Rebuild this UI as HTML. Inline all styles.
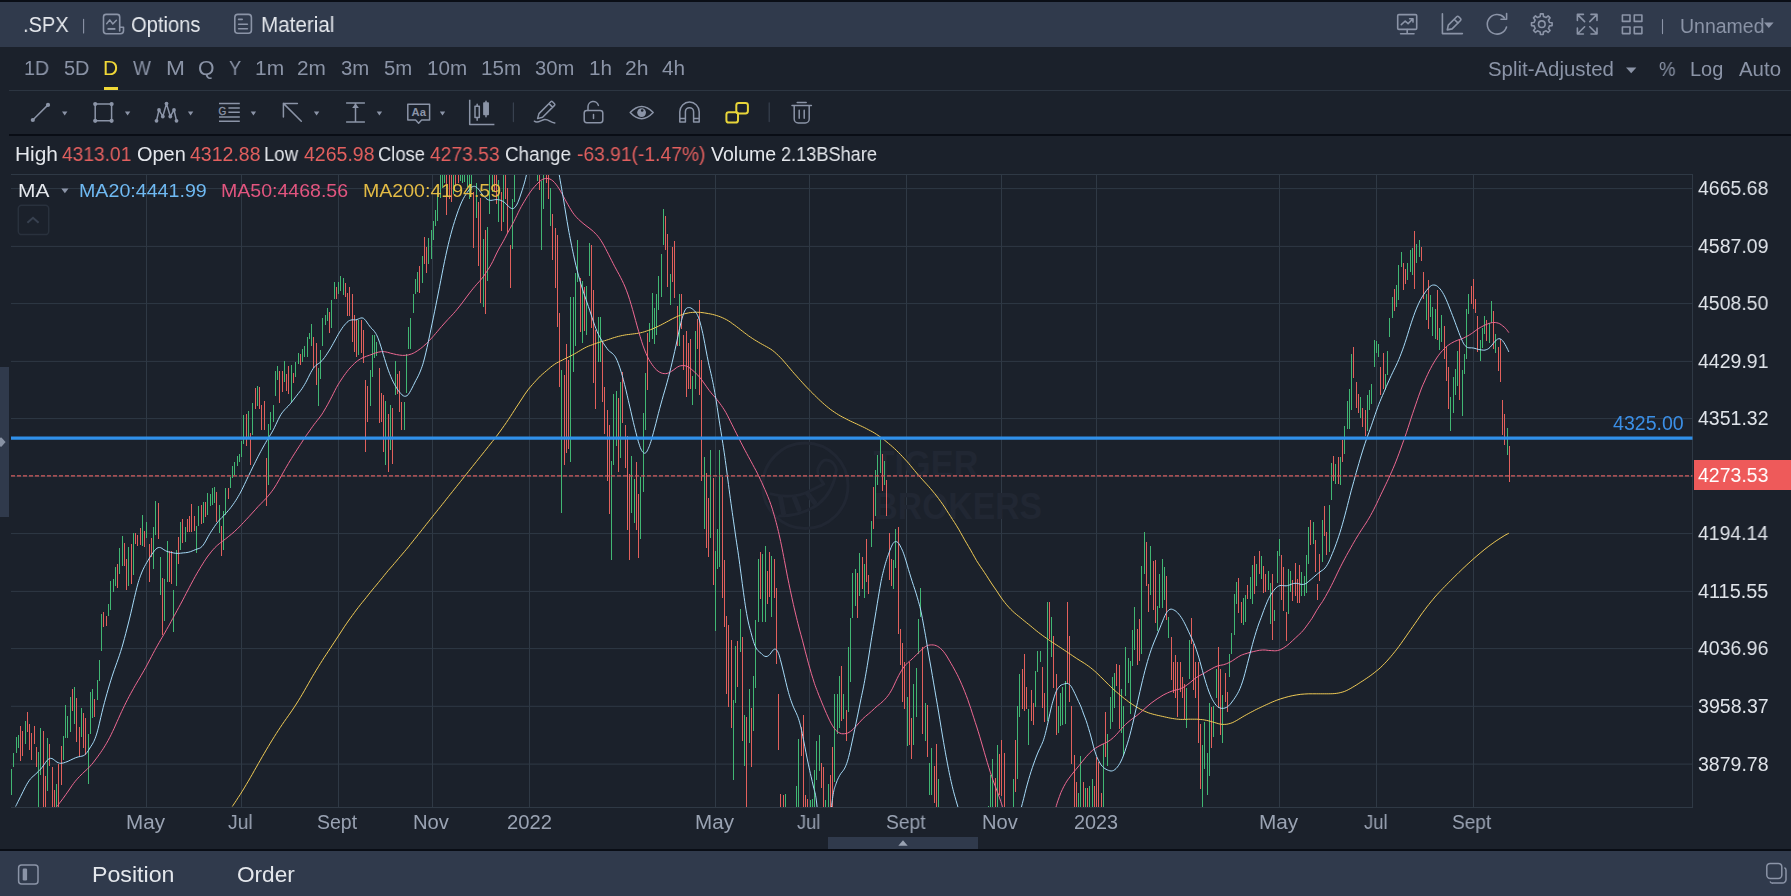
<!DOCTYPE html>
<html lang="en"><head><meta charset="utf-8"><title>.SPX chart</title>
<style>
html,body{margin:0;padding:0}
body{width:1791px;height:896px;overflow:hidden;position:relative;background:#1b212b;font-family:"Liberation Sans",sans-serif}
.abs{position:absolute}
.t{position:absolute;white-space:nowrap;line-height:1;transform-origin:0 50%;display:block;will-change:transform}
svg{position:absolute;left:0;top:0;overflow:visible}
svg text{font-family:"Liberation Sans",sans-serif}
</style></head><body>
<div class="abs" style="left:0;top:0;width:1791px;height:2px;background:#0a0e16"></div>
<div class="abs" style="left:0;top:2px;width:1791px;height:45px;background:#303a4c"></div>
<div class="abs" style="left:0;top:851px;width:1791px;height:45px;background:#303a4c"></div>
<div class="abs" style="left:0;top:849px;width:1791px;height:2px;background:#090d15"></div>
<div class="abs" style="left:9px;top:134px;width:1782px;height:2px;background:#090d15"></div>
<div class="abs" style="left:9px;top:90px;width:1782px;height:1px;background:#2c3541"></div>
<div class="abs" style="left:103.8px;top:87px;width:14.1px;height:3.4px;background:#f0d837"></div>
<div class="abs" style="left:0;top:367px;width:9px;height:150px;background:#303a4c"></div>
<div class="abs" style="left:828px;top:837px;width:150px;height:12px;background:#303a4c"></div>
<div class="abs" style="left:1694px;top:460px;width:97px;height:30px;background:#ee5a5a"></div>

<svg width="1791" height="896" viewBox="0 0 1791 896">
<defs><clipPath id="cc"><rect x="11" y="175" width="1681.5" height="632"/></clipPath></defs>
<path d="M146.5 174.5V807.5M241.5 174.5V807.5M338.5 174.5V807.5M432.5 174.5V807.5M529.5 174.5V807.5M715.5 174.5V807.5M809.5 174.5V807.5M906.5 174.5V807.5M1001.5 174.5V807.5M1096.5 174.5V807.5M1279.5 174.5V807.5M1376.5 174.5V807.5M1473.5 174.5V807.5M11 174.5H1692.5V807.5H11" stroke="#2f3945" stroke-width="1" fill="none" shape-rendering="crispEdges"/><path d="M11 188.6H1692.5M11 246.4H1692.5M11 303.6H1692.5M11 361.4H1692.5M11 418.6H1692.5M11 476.3H1692.5M11 533.6H1692.5M11 591.4H1692.5M11 648.6H1692.5M11 706.3H1692.5M11 764.1H1692.5" stroke="#2f3945" stroke-width="1" fill="none"/>
<g fill="#212733" font-weight="700" font-size="36.5px" style="font-family:'Liberation Sans',sans-serif">
<text x="873.5" y="476.6" textLength="105" lengthAdjust="spacingAndGlyphs">TIGER</text>
<text x="873.5" y="519" textLength="168.5" lengthAdjust="spacingAndGlyphs">BROKERS</text>
</g>
<g fill="none" stroke="#212733" stroke-width="3" stroke-linecap="round" stroke-linejoin="round"><circle cx="805.3" cy="485.8" r="42.7"/>
<path d="M770.9 493.9Q793 500 811.4 490.2Q820 486 823.7 484Q815 472 818.8 466.9Q822 460 826.2 460.1Q832 460.5 834.8 465.6Q837 469 836 472Q833 492 818.8 503.7Q802 516 779.5 516"/>
<path d="M780.5 497.5L783.5 513.5M794.5 498L799 509.5M807.5 493.5L814.5 502.5" stroke-width="5"/></g>
<g clip-path="url(#cc)">
<path d="M20.5 726V761M22.5 731V756M27.5 712V732M29.5 724V750M31.5 733V760M34.5 726V744M36.5 747V767M43.5 731V810M45.5 776V810M49.5 744V766M52.5 767V810M54.5 790V810M58.5 764V810M61.5 746V785M72.5 689V711M76.5 698V742M79.5 727V757M83.5 713V748M85.5 718V755M94.5 699V717M103.5 612V627M106.5 616V626M117.5 564V588M124.5 543V566M126.5 559V590M131.5 544V584M135.5 533V544M137.5 535V546M140.5 528V545M144.5 531V547M149.5 544V582M151.5 538V557M158.5 503V539M162.5 578V635M169.5 551V582M171.5 551V584M178.5 537V564M182.5 519V543M187.5 519V532M189.5 516V532M191.5 504V532M194.5 516V531M201.5 505V524M205.5 502V517M216.5 492V522M221.5 526V556M228.5 488V499M246.5 414V446M250.5 433V465M255.5 388V409M259.5 387V409M261.5 405V430M264.5 401V430M266.5 458V506M279.5 371V403M282.5 371V392M286.5 374V391M288.5 366V394M293.5 373V383M300.5 354V365M313.5 337V368M316.5 343V385M329.5 312V333M336.5 287V299M345.5 283V297M347.5 293V316M349.5 287V316M352.5 294V342M354.5 315V352M356.5 320V357M361.5 320V353M363.5 330V363M365.5 380V452M367.5 386V422M379.5 368V423M381.5 393V422M383.5 395V452M388.5 414V472M392.5 408V464M397.5 374V394M399.5 371V412M401.5 402V430M419.5 266V293M424.5 237V264M426.5 247V273M446.5 170V215M449.5 170V199M451.5 170V202M455.5 170V186M458.5 168V183M473.5 192V248M478.5 202V266M480.5 198V303M485.5 230V314M494.5 170V192M496.5 170V204M501.5 192V231M505.5 170V199M507.5 188V233M510.5 245V288M516.5 140V165M521.5 141V164M528.5 143V162M530.5 141V164M532.5 136V161M534.5 140V165M539.5 170V190M546.5 170V183M548.5 170V199M552.5 214V260M555.5 228V288M557.5 235V327M559.5 313V387M564.5 375V465M566.5 344V453M568.5 360V449M580.5 278V332M584.5 287V331M591.5 245V328M593.5 290V383M595.5 330V409M602.5 342V402M604.5 387V434M607.5 410V481M609.5 425V514M618.5 398V472M622.5 372V423M625.5 425V468M627.5 436V530M629.5 474V560M636.5 462V530M638.5 494V558M647.5 333V390M665.5 216V250M667.5 234V287M672.5 247V282M674.5 241V298M677.5 306V346M681.5 294V329M683.5 335V370M686.5 331V397M688.5 343V389M690.5 339V389M697.5 319V349M699.5 300V395M701.5 360V481M706.5 473V548M708.5 498V557M713.5 478V585M722.5 477V598M724.5 560V627M726.5 616V694M728.5 625V707M731.5 640V728M737.5 641V687M742.5 637V741M746.5 717V810M751.5 708V767M760.5 552V599M767.5 571V604M769.5 552V597M774.5 559V598M776.5 588V664M778.5 694V750M780.5 794V810M783.5 795V810M787.5 830V880M789.5 832V879M794.5 830V880M801.5 727V756M803.5 715V810M805.5 795V810M807.5 799V809M821.5 763V788M823.5 767V810M830.5 775V810M832.5 747V810M841.5 666V721M846.5 710V741M857.5 573V618M862.5 557V589M866.5 539V582M868.5 575V594M873.5 487V529M882.5 454V491M886.5 480V516M889.5 533V580M891.5 559V586M898.5 527V634M900.5 629V665M902.5 643V702M904.5 662V709M909.5 662V745M911.5 718V759M922.5 647V734M927.5 705V757M934.5 766V803M936.5 744V810M940.5 830V880M943.5 833V885M949.5 837V889M954.5 833V890M959.5 820V879M963.5 823V875M965.5 837V872M968.5 831V888M972.5 827V888M974.5 823V874M977.5 825V880M981.5 827V881M983.5 834V880M986.5 830V880M995.5 778V810M999.5 754V795M1001.5 740V796M1004.5 753V810M1006.5 830V870M1008.5 830V870M1015.5 740V792M1022.5 669V709M1024.5 654V711M1026.5 687V709M1031.5 690V721M1033.5 703V725M1042.5 667V708M1044.5 693V722M1049.5 602V639M1053.5 636V688M1056.5 674V735M1067.5 602V684M1069.5 636V702M1071.5 706V764M1074.5 755V810M1076.5 782V810M1083.5 782V810M1087.5 788V810M1094.5 786V810M1096.5 757V810M1098.5 762V810M1101.5 793V810M1105.5 712V757M1116.5 664V686M1119.5 665V729M1137.5 629V665M1139.5 619V661M1146.5 542V586M1148.5 584V612M1153.5 561V610M1155.5 560V623M1166.5 576V620M1171.5 637V680M1173.5 662V693M1175.5 655V698M1177.5 662V717M1180.5 662V692M1182.5 677V698M1184.5 684V719M1191.5 618V644M1193.5 644V690M1195.5 662V698M1198.5 662V743M1200.5 724V789M1211.5 707V748M1218.5 647V708M1220.5 669V735M1225.5 673V702M1227.5 692V712M1238.5 578V613M1241.5 602V623M1247.5 585V599M1254.5 556V594M1259.5 551V574M1263.5 566V593M1265.5 574V592M1272.5 574V640M1281.5 555V600M1283.5 567V611M1286.5 612V641M1292.5 580V601M1295.5 563V596M1297.5 579V603M1299.5 565V603M1310.5 520V545M1315.5 540V572M1317.5 584V600M1319.5 554V581M1324.5 506V536M1326.5 532V555M1333.5 456V481M1338.5 457V484M1342.5 440V462M1353.5 347V378M1356.5 382V408M1358.5 394V413M1362.5 408V427M1365.5 410V436M1380.5 367V395M1383.5 353V389M1394.5 289V311M1403.5 263V290M1405.5 269V284M1414.5 231V289M1421.5 247V261M1423.5 272V299M1428.5 280V329M1437.5 290V340M1444.5 326V359M1446.5 347V381M1448.5 367V409M1459.5 340V400M1471.5 286V304M1473.5 279V309M1475.5 299V313M1477.5 316V352M1486.5 320V341M1493.5 311V349M1498.5 347V371M1500.5 339V382M1502.5 400V435M1504.5 414V445M1509.5 446V482" stroke="#e2605c" stroke-width="1" fill="none" shape-rendering="crispEdges"/>
<path d="M11.5 769V795M13.5 753V767M16.5 737V753M18.5 735V748M25.5 721V744M38.5 752V810M40.5 728V775M47.5 738V791M56.5 784V810M63.5 736V760M65.5 705V738M67.5 716V738M70.5 697V732M74.5 687V724M81.5 708V737M88.5 734V784M90.5 692V734M92.5 689V718M97.5 680V700M99.5 660V681M101.5 614V651M108.5 604V616M110.5 581V610M113.5 579V592M115.5 567V586M119.5 548V574M122.5 536V566M128.5 547V586M133.5 533V575M142.5 515V546M146.5 522V538M153.5 527V569M155.5 501V535M160.5 557V595M164.5 579V621M167.5 541V582M173.5 590V632M176.5 550V586M180.5 522V550M185.5 527V542M196.5 526V553M198.5 506V526M203.5 502V523M207.5 493V515M210.5 494V506M212.5 488V505M214.5 487V503M219.5 505V533M223.5 511V550M225.5 488V515M230.5 477V488M232.5 466V478M234.5 462V475M237.5 456V466M239.5 454V462M241.5 441V457M243.5 415V444M248.5 411V438M252.5 403V435M257.5 386V406M268.5 424V485M270.5 412V430M273.5 405V422M275.5 371V396M277.5 366V380M284.5 361V382M291.5 365V402M295.5 362V377M298.5 353V364M302.5 349V362M304.5 346V357M307.5 337V357M309.5 333V339M311.5 324V346M318.5 368V406M320.5 350V379M322.5 318V346M325.5 315V325M327.5 308V321M331.5 300V328M334.5 282V299M338.5 282V294M340.5 276V291M343.5 278V295M358.5 320V355M370.5 370V406M372.5 335V377M374.5 335V358M376.5 342V356M385.5 401V465M390.5 405V450M395.5 361V395M404.5 402V430M406.5 354V393M408.5 327V349M410.5 318V349M413.5 294V313M415.5 279V294M417.5 272V292M422.5 256V283M428.5 238V264M431.5 230V259M433.5 221V240M435.5 210V226M437.5 192V221M440.5 170V198M442.5 170V188M444.5 170V183M453.5 166V194M460.5 170V181M462.5 170V183M464.5 170V182M467.5 169V187M469.5 170V199M471.5 170V190M476.5 183V218M483.5 239V307M487.5 227V281M489.5 170V214M492.5 170V192M498.5 180V222M503.5 170V222M512.5 199V249M514.5 170V202M519.5 137V166M523.5 135V169M525.5 136V161M537.5 170V181M541.5 181V250M543.5 170V209M550.5 188V226M561.5 370V513M570.5 297V462M573.5 297V372M575.5 273V346M577.5 240V282M582.5 281V343M586.5 286V335M589.5 243V276M598.5 317V362M600.5 317V362M611.5 461V560M613.5 394V465M616.5 391V446M620.5 382V458M631.5 456V513M634.5 479V523M640.5 477V539M643.5 413V492M645.5 373V430M649.5 323V342M652.5 293V339M654.5 308V344M656.5 294V335M658.5 276V310M661.5 254V297M663.5 209V245M670.5 274V305M679.5 294V346M692.5 376V405M695.5 331V389M704.5 457V529M710.5 450V538M715.5 551V631M717.5 529V569M719.5 450V567M733.5 700V780M735.5 646V703M740.5 609V652M744.5 715V766M749.5 689V743M753.5 676V731M755.5 620V688M758.5 559V622M762.5 554V622M765.5 546V622M771.5 556V617M785.5 794V810M792.5 836V884M796.5 786V846M798.5 739V810M810.5 800V810M812.5 799V810M814.5 770V810M816.5 741V780M819.5 735V771M825.5 800V810M828.5 784V809M834.5 694V782M837.5 694V734M839.5 676V728M843.5 694V719M848.5 647V712M850.5 618V682M852.5 573V618M855.5 569V606M859.5 553V596M864.5 564V598M871.5 521V547M875.5 470V516M877.5 455V485M880.5 437V473M884.5 461V485M893.5 560V589M895.5 529V568M907.5 697V746M913.5 684V745M916.5 668V717M918.5 619V654M920.5 588V617M925.5 703V741M929.5 763V795M931.5 748V795M938.5 779V845M945.5 838V876M947.5 832V882M952.5 833V871M956.5 826V878M961.5 822V871M970.5 837V876M979.5 825V870M988.5 806V837M990.5 775V810M992.5 759V810M997.5 745V810M1010.5 808V845M1013.5 779V810M1017.5 706V779M1019.5 674V717M1028.5 709V745M1035.5 671V707M1037.5 651V672M1040.5 651V662M1047.5 602V721M1051.5 617V657M1058.5 706V733M1060.5 693V726M1062.5 687V725M1065.5 681V724M1078.5 793V810M1080.5 756V810M1085.5 788V810M1089.5 786V810M1092.5 779V810M1103.5 744V810M1107.5 734V766M1110.5 697V729M1112.5 677V722M1114.5 673V708M1121.5 689V733M1123.5 706V756M1125.5 647V696M1128.5 658V683M1130.5 661V714M1132.5 630V666M1134.5 607V650M1141.5 566V654M1144.5 532V574M1150.5 546V595M1157.5 606V631M1159.5 574V608M1162.5 559V608M1164.5 567V600M1168.5 617V638M1186.5 688V728M1189.5 640V679M1202.5 745V810M1204.5 722V769M1207.5 753V795M1209.5 703V776M1213.5 706V737M1216.5 669V698M1222.5 695V743M1229.5 654V677M1231.5 633V654M1234.5 594V635M1236.5 582V604M1243.5 598V625M1245.5 595V622M1250.5 577V599M1252.5 565V604M1256.5 564V586M1261.5 556V579M1268.5 571V590M1270.5 583V624M1274.5 610V621M1277.5 551V583M1279.5 539V556M1288.5 569V614M1290.5 571V592M1301.5 572V596M1304.5 576V596M1306.5 555V593M1308.5 527V564M1313.5 522V544M1322.5 520V562M1329.5 505V552M1331.5 463V500M1335.5 464V484M1340.5 457V485M1344.5 426V454M1347.5 401V429M1349.5 389V429M1351.5 354V410M1360.5 397V418M1367.5 395V431M1369.5 390V410M1371.5 384V404M1374.5 340V367M1376.5 341V353M1378.5 344V357M1385.5 374V390M1387.5 351V375M1389.5 318V337M1392.5 297V318M1396.5 285V307M1398.5 265V300M1401.5 252V267M1407.5 263V280M1410.5 250V272M1412.5 248V275M1416.5 244V263M1419.5 240V257M1426.5 294V320M1430.5 295V317M1432.5 307V336M1435.5 309V339M1439.5 328V350M1441.5 315V342M1450.5 397V431M1453.5 377V413M1455.5 369V395M1457.5 351V386M1462.5 370V416M1464.5 354V374M1466.5 309V359M1468.5 294V314M1480.5 340V361M1482.5 328V348M1484.5 316V334M1489.5 323V343M1491.5 301V323M1495.5 334V353M1507.5 428V455" stroke="#41b673" stroke-width="1" fill="none" shape-rendering="crispEdges"/>
<path d="M232.3 806.5 C233.0 805.5 234.8 802.7 236.3 800.5 C237.7 798.3 238.8 796.6 240.3 794.4 C241.7 792.1 242.8 790.3 244.3 787.9 C245.7 785.5 246.8 783.7 248.3 781.2 C249.7 778.7 250.8 776.8 252.3 774.3 C253.7 771.7 254.8 769.7 256.3 767.2 C257.7 764.7 258.8 762.7 260.3 760.2 C261.7 757.7 262.8 755.7 264.3 753.3 C265.7 750.8 266.8 748.9 268.3 746.5 C269.7 744.1 270.9 742.2 272.3 739.9 C273.7 737.6 274.9 735.8 276.3 733.5 C277.7 731.3 278.9 729.6 280.3 727.4 C281.7 725.2 282.9 723.6 284.3 721.5 C285.7 719.4 286.9 717.9 288.3 715.8 C289.7 713.8 290.9 712.2 292.3 710.1 C293.7 707.9 294.9 706.2 296.3 704.0 C297.7 701.7 298.9 699.9 300.3 697.6 C301.7 695.2 302.9 693.3 304.3 690.8 C305.7 688.3 306.9 686.3 308.3 683.8 C309.8 681.2 310.9 679.3 312.3 676.8 C313.8 674.4 314.9 672.5 316.3 670.1 C317.8 667.7 318.9 665.9 320.3 663.6 C321.8 661.3 322.9 659.6 324.3 657.3 C325.8 655.1 326.9 653.5 328.3 651.3 C329.8 649.1 330.9 647.4 332.3 645.2 C333.8 643.0 334.9 641.3 336.3 639.1 C337.8 636.9 338.9 635.2 340.3 633.0 C341.8 630.8 342.9 629.0 344.3 626.8 C345.8 624.7 346.9 623.0 348.3 621.0 C349.8 618.9 350.9 617.4 352.3 615.5 C353.8 613.5 354.9 611.9 356.3 610.0 C357.8 608.1 358.9 606.6 360.3 604.8 C361.8 603.0 362.9 601.7 364.3 599.9 C365.8 598.1 366.9 596.7 368.3 594.9 C369.8 593.1 370.9 591.6 372.3 589.9 C373.8 588.1 374.9 586.8 376.3 585.1 C377.8 583.3 378.9 582.0 380.3 580.2 C381.8 578.5 382.9 577.0 384.3 575.3 C385.8 573.5 386.9 572.1 388.3 570.4 C389.8 568.7 390.9 567.5 392.4 565.8 C393.8 564.1 394.9 562.8 396.4 561.1 C397.8 559.4 398.9 558.0 400.4 556.4 C401.8 554.7 402.9 553.4 404.4 551.7 C405.8 550.0 406.9 548.7 408.4 546.9 C409.8 545.2 410.9 543.7 412.4 541.9 C413.8 540.1 414.9 538.7 416.4 536.9 C417.8 535.1 418.9 533.7 420.4 531.9 C421.8 530.1 422.9 528.7 424.4 526.8 C425.8 525.0 426.9 523.6 428.4 521.8 C429.8 520.0 430.9 518.6 432.4 516.8 C433.8 515.0 434.9 513.6 436.4 511.8 C437.8 510.0 438.9 508.6 440.4 506.8 C441.8 505.0 442.9 503.6 444.4 501.8 C445.8 499.9 446.9 498.5 448.4 496.7 C449.8 494.9 450.9 493.5 452.4 491.7 C453.8 489.9 454.9 488.5 456.4 486.7 C457.8 484.9 458.9 483.5 460.4 481.7 C461.8 479.9 462.9 478.5 464.4 476.7 C465.8 474.9 466.9 473.4 468.4 471.6 C469.8 469.8 471.0 468.4 472.4 466.6 C473.8 464.8 475.0 463.4 476.4 461.6 C477.8 459.8 479.0 458.4 480.4 456.6 C481.8 454.8 483.0 453.4 484.4 451.6 C485.8 449.8 487.0 448.4 488.4 446.5 C489.8 444.7 491.0 443.4 492.4 441.5 C493.8 439.7 495.0 438.3 496.4 436.4 C497.8 434.5 499.0 432.9 500.4 431.0 C501.8 429.0 503.0 427.4 504.4 425.4 C505.8 423.3 507.0 421.7 508.4 419.5 C509.9 417.3 511.0 415.6 512.4 413.4 C513.9 411.1 515.0 409.3 516.4 407.1 C517.9 404.9 519.0 403.2 520.4 401.0 C521.9 398.8 523.0 397.0 524.4 394.9 C525.9 392.8 527.0 391.1 528.4 389.3 C529.9 387.4 531.0 386.3 532.4 384.6 C533.9 383.0 535.0 381.7 536.4 380.2 C537.9 378.6 539.0 377.4 540.4 376.0 C541.9 374.7 543.0 373.7 544.4 372.5 C545.9 371.2 547.0 370.3 548.4 369.1 C549.9 367.9 551.0 366.8 552.4 365.8 C553.9 364.7 555.0 364.0 556.4 363.1 C557.9 362.3 559.0 361.8 560.4 361.0 C561.9 360.3 563.0 359.8 564.4 359.0 C565.9 358.3 567.0 357.8 568.4 357.1 C569.9 356.4 571.0 355.8 572.4 355.0 C573.9 354.2 575.0 353.6 576.4 352.8 C577.9 351.9 579.0 351.2 580.4 350.4 C581.9 349.5 583.0 348.8 584.4 348.1 C585.9 347.3 587.0 346.8 588.4 346.2 C589.9 345.6 591.0 345.2 592.5 344.7 C593.9 344.1 595.0 343.7 596.5 343.2 C597.9 342.7 599.0 342.4 600.5 341.9 C601.9 341.5 603.0 341.2 604.5 340.8 C605.9 340.3 607.0 340.0 608.5 339.5 C609.9 339.0 611.0 338.6 612.5 338.1 C613.9 337.7 615.0 337.3 616.5 336.9 C617.9 336.5 619.0 336.2 620.5 335.9 C621.9 335.6 623.0 335.3 624.5 335.1 C625.9 334.8 627.0 334.7 628.5 334.5 C629.9 334.3 631.0 334.2 632.5 334.0 C633.9 333.8 635.0 333.7 636.5 333.5 C637.9 333.3 639.0 333.1 640.5 332.8 C641.9 332.5 643.0 332.2 644.5 331.7 C645.9 331.3 647.0 330.9 648.5 330.4 C649.9 329.9 651.0 329.5 652.5 328.9 C653.9 328.3 655.0 327.8 656.5 327.1 C657.9 326.5 659.0 325.9 660.5 325.2 C661.9 324.4 663.0 323.9 664.5 323.1 C665.9 322.3 667.0 321.7 668.5 320.9 C669.9 320.1 671.1 319.5 672.5 318.7 C673.9 318.0 675.1 317.4 676.5 316.8 C677.9 316.1 679.1 315.7 680.5 315.2 C681.9 314.6 683.1 314.2 684.5 313.8 C685.9 313.4 687.1 313.2 688.5 312.9 C689.9 312.6 691.1 312.5 692.5 312.4 C693.9 312.3 695.1 312.2 696.5 312.2 C697.9 312.2 699.1 312.3 700.5 312.4 C701.9 312.5 703.1 312.7 704.5 312.9 C705.9 313.1 707.1 313.3 708.5 313.6 C709.9 313.9 711.1 314.0 712.5 314.4 C714.0 314.7 715.1 315.1 716.5 315.5 C718.0 316.0 719.1 316.4 720.5 316.9 C722.0 317.5 723.1 318.0 724.5 318.7 C726.0 319.4 727.1 320.0 728.5 320.9 C730.0 321.8 731.1 322.6 732.5 323.7 C734.0 324.7 735.1 325.5 736.5 326.6 C738.0 327.7 739.1 328.6 740.5 329.7 C742.0 330.8 743.1 331.7 744.5 332.8 C746.0 333.9 747.1 334.7 748.5 335.8 C750.0 336.8 751.1 337.6 752.5 338.5 C754.0 339.5 755.1 340.2 756.5 341.0 C758.0 341.9 759.1 342.6 760.5 343.4 C762.0 344.2 763.1 344.8 764.5 345.6 C766.0 346.4 767.1 347.0 768.5 347.8 C770.0 348.7 771.1 349.3 772.5 350.4 C774.0 351.5 775.1 352.5 776.5 353.8 C778.0 355.1 779.1 356.2 780.5 357.7 C782.0 359.2 783.1 360.4 784.5 362.1 C786.0 363.7 787.1 365.1 788.5 366.8 C790.0 368.5 791.1 369.9 792.6 371.6 C794.0 373.3 795.1 374.5 796.6 376.1 C798.0 377.8 799.1 379.0 800.6 380.6 C802.0 382.2 803.1 383.4 804.6 385.0 C806.0 386.5 807.1 387.7 808.6 389.2 C810.0 390.7 811.1 391.8 812.6 393.2 C814.0 394.7 815.1 395.8 816.6 397.2 C818.0 398.6 819.1 399.6 820.6 401.0 C822.0 402.3 823.1 403.3 824.6 404.6 C826.0 405.8 827.1 406.8 828.6 407.9 C830.0 409.1 831.1 409.9 832.6 410.9 C834.0 411.9 835.1 412.7 836.6 413.6 C838.0 414.5 839.1 415.2 840.6 416.0 C842.0 416.8 843.1 417.4 844.6 418.1 C846.0 418.9 847.1 419.4 848.6 420.2 C850.0 420.9 851.1 421.4 852.6 422.1 C854.0 422.8 855.1 423.2 856.6 423.9 C858.0 424.6 859.1 425.1 860.6 425.8 C862.0 426.4 863.1 427.0 864.6 427.7 C866.0 428.4 867.1 429.0 868.6 429.8 C870.0 430.5 871.1 431.1 872.6 431.9 C874.0 432.8 875.2 433.4 876.6 434.4 C878.0 435.3 879.2 436.1 880.6 437.1 C882.0 438.2 883.2 439.0 884.6 440.2 C886.0 441.3 887.2 442.3 888.6 443.5 C890.0 444.7 891.2 445.6 892.6 446.9 C894.0 448.2 895.2 449.2 896.6 450.6 C898.0 452.0 899.2 453.1 900.6 454.6 C902.0 456.1 903.2 457.3 904.6 458.9 C906.0 460.4 907.2 461.6 908.6 463.3 C910.0 464.9 911.2 466.4 912.6 468.2 C914.1 469.9 915.2 471.3 916.6 473.0 C918.1 474.7 919.2 476.0 920.6 477.6 C922.1 479.2 923.2 480.5 924.6 482.0 C926.1 483.6 927.2 484.8 928.6 486.4 C930.1 488.0 931.2 489.4 932.6 491.1 C934.1 492.8 935.2 494.2 936.6 496.0 C938.1 497.9 939.2 499.4 940.6 501.4 C942.1 503.4 943.2 505.0 944.6 507.1 C946.1 509.3 947.2 511.2 948.6 513.4 C950.1 515.6 951.2 517.3 952.6 519.6 C954.1 521.8 955.2 523.4 956.6 525.8 C958.1 528.1 959.2 530.1 960.6 532.6 C962.1 535.2 963.2 537.3 964.6 539.8 C966.1 542.3 967.2 544.2 968.6 546.6 C970.1 549.1 971.2 551.0 972.6 553.6 C974.1 556.1 975.2 558.3 976.6 560.7 C978.1 563.0 979.2 564.7 980.6 566.8 C982.1 569.0 983.2 570.5 984.6 572.7 C986.1 574.8 987.2 576.7 988.6 578.9 C990.1 581.2 991.2 582.9 992.6 585.0 C994.1 587.2 995.2 588.7 996.7 590.9 C998.1 593.0 999.2 594.9 1000.7 597.0 C1002.1 599.1 1003.2 600.5 1004.7 602.4 C1006.1 604.2 1007.2 605.5 1008.7 607.1 C1010.1 608.7 1011.2 609.8 1012.7 611.2 C1014.1 612.6 1015.2 613.5 1016.7 614.7 C1018.1 615.9 1019.2 616.7 1020.7 617.9 C1022.1 619.0 1023.2 620.1 1024.7 621.2 C1026.1 622.4 1027.2 623.2 1028.7 624.4 C1030.1 625.5 1031.2 626.5 1032.7 627.7 C1034.1 628.9 1035.2 629.9 1036.7 631.0 C1038.1 632.2 1039.2 633.0 1040.7 634.1 C1042.1 635.2 1043.2 636.0 1044.7 637.0 C1046.1 638.0 1047.2 638.8 1048.7 639.8 C1050.1 640.8 1051.2 641.6 1052.7 642.5 C1054.1 643.5 1055.2 644.2 1056.7 645.1 C1058.1 646.1 1059.2 646.8 1060.7 647.7 C1062.1 648.7 1063.2 649.4 1064.7 650.4 C1066.1 651.3 1067.2 652.1 1068.7 653.1 C1070.1 654.1 1071.2 654.8 1072.7 655.8 C1074.1 656.8 1075.3 657.5 1076.7 658.5 C1078.1 659.4 1079.3 660.1 1080.7 661.0 C1082.1 661.9 1083.3 662.6 1084.7 663.5 C1086.1 664.5 1087.3 665.2 1088.7 666.3 C1090.1 667.3 1091.3 668.2 1092.7 669.4 C1094.1 670.6 1095.3 671.6 1096.7 672.9 C1098.1 674.2 1099.3 675.4 1100.7 676.8 C1102.1 678.2 1103.3 679.4 1104.7 680.8 C1106.1 682.2 1107.3 683.4 1108.7 684.8 C1110.1 686.2 1111.3 687.2 1112.7 688.6 C1114.1 689.9 1115.3 690.9 1116.7 692.2 C1118.2 693.4 1119.3 694.4 1120.7 695.6 C1122.2 696.8 1123.3 697.7 1124.7 698.8 C1126.2 699.9 1127.3 700.8 1128.7 701.9 C1130.2 702.9 1131.3 703.7 1132.7 704.6 C1134.2 705.6 1135.3 706.2 1136.7 707.1 C1138.2 707.9 1139.3 708.6 1140.7 709.4 C1142.2 710.1 1143.3 710.7 1144.7 711.3 C1146.2 711.9 1147.3 712.4 1148.7 712.9 C1150.2 713.4 1151.3 713.7 1152.7 714.1 C1154.2 714.5 1155.3 714.8 1156.7 715.1 C1158.2 715.5 1159.3 715.7 1160.7 716.0 C1162.2 716.3 1163.3 716.6 1164.7 716.9 C1166.2 717.2 1167.3 717.5 1168.7 717.8 C1170.2 718.1 1171.3 718.3 1172.7 718.5 C1174.2 718.8 1175.3 718.9 1176.7 719.1 C1178.2 719.2 1179.3 719.3 1180.7 719.4 C1182.2 719.4 1183.3 719.4 1184.7 719.4 C1186.2 719.3 1187.3 719.3 1188.7 719.2 C1190.2 719.2 1191.3 719.2 1192.7 719.2 C1194.2 719.2 1195.3 719.2 1196.8 719.2 C1198.2 719.3 1199.3 719.3 1200.8 719.5 C1202.2 719.6 1203.3 719.7 1204.8 720.0 C1206.2 720.3 1207.3 720.5 1208.8 720.9 C1210.2 721.2 1211.3 721.6 1212.8 722.0 C1214.2 722.4 1215.3 722.8 1216.8 723.2 C1218.2 723.6 1219.3 724.0 1220.8 724.2 C1222.2 724.4 1223.3 724.5 1224.8 724.4 C1226.2 724.4 1227.3 724.2 1228.8 723.8 C1230.2 723.5 1231.3 723.1 1232.8 722.5 C1234.2 721.8 1235.3 721.2 1236.8 720.4 C1238.2 719.6 1239.3 718.8 1240.8 718.0 C1242.2 717.1 1243.3 716.4 1244.8 715.6 C1246.2 714.8 1247.3 714.2 1248.8 713.4 C1250.2 712.6 1251.3 712.0 1252.8 711.3 C1254.2 710.5 1255.3 709.9 1256.8 709.2 C1258.2 708.5 1259.3 708.0 1260.8 707.3 C1262.2 706.6 1263.3 706.1 1264.8 705.4 C1266.2 704.8 1267.3 704.2 1268.8 703.6 C1270.2 702.9 1271.3 702.4 1272.8 701.8 C1274.2 701.2 1275.3 700.8 1276.8 700.2 C1278.2 699.7 1279.4 699.3 1280.8 698.8 C1282.2 698.3 1283.4 698.0 1284.8 697.6 C1286.2 697.2 1287.4 696.9 1288.8 696.5 C1290.2 696.1 1291.4 695.9 1292.8 695.6 C1294.2 695.3 1295.4 695.1 1296.8 694.9 C1298.2 694.6 1299.4 694.5 1300.8 694.3 C1302.2 694.2 1303.4 694.1 1304.8 694.0 C1306.2 693.9 1307.4 693.8 1308.8 693.8 C1310.2 693.7 1311.4 693.8 1312.8 693.8 C1314.2 693.7 1315.4 693.8 1316.8 693.8 C1318.3 693.8 1319.4 693.8 1320.8 693.8 C1322.3 693.8 1323.4 693.8 1324.8 693.8 C1326.3 693.8 1327.4 693.8 1328.8 693.8 C1330.3 693.7 1331.4 693.8 1332.8 693.7 C1334.3 693.6 1335.4 693.5 1336.8 693.3 C1338.3 693.1 1339.4 692.9 1340.8 692.5 C1342.3 692.2 1343.4 691.8 1344.8 691.3 C1346.3 690.7 1347.4 690.2 1348.8 689.4 C1350.3 688.7 1351.4 688.0 1352.8 687.1 C1354.3 686.3 1355.4 685.6 1356.8 684.7 C1358.3 683.8 1359.4 683.0 1360.8 682.1 C1362.3 681.2 1363.4 680.5 1364.8 679.5 C1366.3 678.5 1367.4 677.8 1368.8 676.8 C1370.3 675.8 1371.4 675.0 1372.8 673.9 C1374.3 672.8 1375.4 671.9 1376.8 670.7 C1378.3 669.6 1379.4 668.6 1380.8 667.3 C1382.3 665.9 1383.4 664.8 1384.8 663.3 C1386.3 661.8 1387.4 660.6 1388.8 658.9 C1390.3 657.3 1391.4 655.9 1392.8 654.2 C1394.3 652.4 1395.4 651.0 1396.9 649.1 C1398.3 647.2 1399.4 645.7 1400.9 643.7 C1402.3 641.7 1403.4 640.1 1404.9 638.0 C1406.3 636.0 1407.4 634.3 1408.9 632.2 C1410.3 630.2 1411.4 628.6 1412.9 626.5 C1414.3 624.5 1415.4 622.9 1416.9 620.8 C1418.3 618.8 1419.4 617.1 1420.9 615.0 C1422.3 613.0 1423.4 611.5 1424.9 609.6 C1426.3 607.6 1427.4 606.2 1428.9 604.4 C1430.3 602.6 1431.4 601.2 1432.9 599.5 C1434.3 597.7 1435.4 596.4 1436.9 594.8 C1438.3 593.2 1439.4 592.1 1440.9 590.5 C1442.3 589.0 1443.4 587.9 1444.9 586.4 C1446.3 584.9 1447.4 583.8 1448.9 582.3 C1450.3 580.9 1451.4 579.7 1452.9 578.3 C1454.3 576.9 1455.4 575.8 1456.9 574.4 C1458.3 572.9 1459.4 571.9 1460.9 570.5 C1462.3 569.1 1463.4 568.0 1464.9 566.7 C1466.3 565.3 1467.4 564.3 1468.9 563.0 C1470.3 561.7 1471.4 560.7 1472.9 559.4 C1474.3 558.1 1475.4 557.1 1476.9 555.9 C1478.3 554.7 1479.5 553.7 1480.9 552.5 C1482.3 551.3 1483.5 550.4 1484.9 549.2 C1486.3 548.1 1487.5 547.2 1488.9 546.1 C1490.3 545.0 1491.5 544.2 1492.9 543.2 C1494.3 542.1 1495.5 541.3 1496.9 540.4 C1498.3 539.4 1499.5 538.8 1500.9 537.8 C1502.3 536.9 1503.5 536.2 1504.9 535.3 C1506.3 534.5 1508.2 533.6 1508.9 533.2" stroke="#efca55" stroke-width="1" fill="none" stroke-linejoin="round"/>
<path d="M57.0 806.5 C57.5 805.8 58.9 804.0 60.0 802.5 C61.0 801.1 61.9 799.9 63.0 798.5 C64.0 797.0 64.9 795.8 66.0 794.3 C67.1 792.8 67.9 791.6 69.0 790.0 C70.1 788.5 70.9 787.1 72.0 785.6 C73.1 784.1 73.9 783.0 75.0 781.6 C76.1 780.3 76.9 779.3 78.0 778.1 C79.1 776.9 79.9 776.1 81.0 775.0 C82.1 774.0 82.9 773.2 84.0 772.1 C85.1 771.1 85.9 770.4 87.0 769.4 C88.1 768.3 88.9 767.5 90.0 766.3 C91.1 765.1 91.9 764.2 93.0 762.9 C94.1 761.5 94.9 760.3 96.0 758.9 C97.1 757.4 98.0 756.3 99.0 754.8 C100.1 753.3 101.0 752.1 102.0 750.5 C103.1 748.9 104.0 747.6 105.0 745.8 C106.1 744.0 107.0 742.5 108.1 740.5 C109.1 738.5 110.0 736.9 111.1 734.7 C112.1 732.5 113.0 730.7 114.1 728.4 C115.1 726.0 116.0 724.0 117.1 721.6 C118.2 719.2 119.0 717.3 120.1 714.9 C121.2 712.5 122.0 710.7 123.1 708.5 C124.2 706.2 125.0 704.5 126.1 702.3 C127.2 700.2 128.0 698.5 129.1 696.5 C130.2 694.5 131.0 692.9 132.1 691.0 C133.2 689.1 134.0 687.6 135.1 685.7 C136.2 683.8 137.0 682.4 138.1 680.6 C139.2 678.8 140.0 677.4 141.1 675.5 C142.2 673.7 143.0 672.2 144.1 670.3 C145.2 668.4 146.0 666.9 147.1 664.9 C148.2 662.9 149.1 661.2 150.1 659.2 C151.2 657.1 152.1 655.5 153.1 653.5 C154.2 651.4 155.1 649.8 156.1 647.9 C157.2 645.9 158.1 644.4 159.2 642.5 C160.2 640.6 161.1 639.1 162.2 637.3 C163.2 635.4 164.1 634.0 165.2 632.1 C166.2 630.2 167.1 628.7 168.2 626.8 C169.3 624.9 170.1 623.4 171.2 621.4 C172.3 619.4 173.1 617.8 174.2 615.8 C175.3 613.9 176.1 612.3 177.2 610.3 C178.3 608.3 179.1 606.8 180.2 604.8 C181.3 602.8 182.1 601.2 183.2 599.2 C184.3 597.1 185.1 595.5 186.2 593.4 C187.3 591.4 188.1 589.7 189.2 587.7 C190.3 585.6 191.1 584.0 192.2 582.0 C193.3 580.0 194.1 578.5 195.2 576.5 C196.3 574.6 197.1 573.1 198.2 571.3 C199.3 569.4 200.2 568.1 201.2 566.3 C202.3 564.5 203.2 563.2 204.2 561.5 C205.3 559.8 206.2 558.5 207.2 557.0 C208.3 555.5 209.2 554.4 210.3 553.0 C211.3 551.6 212.2 550.6 213.3 549.4 C214.3 548.2 215.2 547.3 216.3 546.3 C217.3 545.3 218.2 544.6 219.3 543.7 C220.4 542.8 221.2 542.2 222.3 541.4 C223.4 540.5 224.2 539.9 225.3 539.1 C226.4 538.2 227.2 537.6 228.3 536.7 C229.4 535.9 230.2 535.2 231.3 534.3 C232.4 533.4 233.2 532.6 234.3 531.7 C235.4 530.7 236.2 529.9 237.3 528.9 C238.4 527.8 239.2 527.0 240.3 525.9 C241.4 524.7 242.2 523.9 243.3 522.7 C244.4 521.6 245.2 520.7 246.3 519.5 C247.4 518.4 248.2 517.5 249.3 516.3 C250.4 515.1 251.3 514.2 252.3 513.0 C253.4 511.8 254.3 510.9 255.3 509.7 C256.4 508.5 257.3 507.5 258.3 506.3 C259.4 505.2 260.3 504.3 261.4 503.2 C262.4 502.0 263.3 501.3 264.4 500.1 C265.4 499.0 266.3 498.1 267.4 496.9 C268.4 495.6 269.3 494.6 270.4 493.2 C271.5 491.8 272.3 490.7 273.4 489.2 C274.5 487.6 275.3 486.3 276.4 484.5 C277.5 482.7 278.3 481.2 279.4 479.3 C280.5 477.4 281.3 475.8 282.4 473.9 C283.5 472.0 284.3 470.5 285.4 468.6 C286.5 466.8 287.3 465.4 288.4 463.5 C289.5 461.7 290.3 460.3 291.4 458.6 C292.5 456.8 293.3 455.5 294.4 453.8 C295.5 452.1 296.3 450.8 297.4 449.1 C298.5 447.4 299.4 446.1 300.4 444.5 C301.5 442.8 302.4 441.5 303.4 439.8 C304.5 438.2 305.4 436.9 306.4 435.3 C307.5 433.7 308.4 432.5 309.5 431.0 C310.5 429.4 311.4 428.2 312.5 426.7 C313.5 425.2 314.4 424.1 315.5 422.7 C316.5 421.3 317.4 420.3 318.5 418.9 C319.6 417.5 320.4 416.4 321.5 414.9 C322.6 413.3 323.4 411.9 324.5 410.0 C325.6 408.2 326.4 406.7 327.5 404.8 C328.6 402.8 329.4 401.3 330.5 399.2 C331.6 397.2 332.4 395.4 333.5 393.3 C334.6 391.2 335.4 389.4 336.5 387.4 C337.6 385.5 338.4 384.1 339.5 382.4 C340.6 380.6 341.4 379.4 342.5 377.8 C343.6 376.2 344.4 375.0 345.5 373.6 C346.6 372.1 347.4 371.0 348.5 369.7 C349.6 368.4 350.5 367.5 351.5 366.4 C352.6 365.2 353.5 364.4 354.5 363.4 C355.6 362.4 356.5 361.6 357.5 360.8 C358.6 360.0 359.5 359.4 360.6 358.8 C361.6 358.2 362.5 357.8 363.6 357.4 C364.6 356.9 365.5 356.6 366.6 356.2 C367.6 355.8 368.5 355.5 369.6 355.2 C370.7 354.8 371.5 354.5 372.6 354.1 C373.7 353.7 374.5 353.3 375.6 352.9 C376.7 352.6 377.5 352.3 378.6 352.1 C379.7 351.9 380.5 351.7 381.6 351.6 C382.7 351.6 383.5 351.6 384.6 351.7 C385.7 351.8 386.5 352.0 387.6 352.3 C388.7 352.5 389.5 352.9 390.6 353.2 C391.7 353.5 392.5 353.7 393.6 353.9 C394.7 354.2 395.5 354.4 396.6 354.6 C397.7 354.8 398.5 354.9 399.6 355.1 C400.7 355.2 401.6 355.4 402.6 355.4 C403.7 355.4 404.6 355.4 405.6 355.3 C406.7 355.2 407.6 355.1 408.6 354.8 C409.7 354.6 410.6 354.3 411.7 353.9 C412.7 353.5 413.6 353.1 414.7 352.5 C415.7 351.9 416.6 351.3 417.7 350.6 C418.7 349.9 419.6 349.3 420.7 348.5 C421.8 347.7 422.6 347.0 423.7 346.0 C424.8 345.1 425.6 344.3 426.7 343.3 C427.8 342.2 428.6 341.4 429.7 340.2 C430.8 339.1 431.6 338.1 432.7 336.9 C433.8 335.7 434.6 334.7 435.7 333.4 C436.8 332.2 437.6 331.2 438.7 329.9 C439.8 328.6 440.6 327.6 441.7 326.4 C442.8 325.2 443.6 324.2 444.7 323.0 C445.8 321.8 446.6 320.9 447.7 319.7 C448.8 318.6 449.6 317.7 450.7 316.5 C451.8 315.4 452.7 314.5 453.7 313.3 C454.8 312.1 455.7 311.1 456.7 309.8 C457.8 308.5 458.7 307.4 459.7 306.1 C460.8 304.7 461.7 303.5 462.8 302.1 C463.8 300.7 464.7 299.5 465.8 298.0 C466.8 296.6 467.7 295.5 468.8 294.0 C469.8 292.6 470.7 291.6 471.8 290.2 C472.9 288.8 473.7 287.8 474.8 286.5 C475.9 285.2 476.7 284.3 477.8 283.1 C478.9 281.9 479.7 281.1 480.8 279.8 C481.9 278.5 482.7 277.5 483.8 276.0 C484.9 274.5 485.7 273.1 486.8 271.4 C487.9 269.8 488.7 268.6 489.8 266.8 C490.9 265.0 491.7 263.5 492.8 261.4 C493.9 259.3 494.7 257.3 495.8 255.0 C496.9 252.8 497.7 251.1 498.8 249.1 C499.9 247.1 500.7 245.8 501.8 243.9 C502.9 242.0 503.8 240.5 504.8 238.4 C505.9 236.4 506.8 234.6 507.8 232.6 C508.9 230.6 509.8 229.2 510.8 227.2 C511.9 225.2 512.8 223.6 513.9 221.5 C514.9 219.4 515.8 217.6 516.9 215.4 C517.9 213.2 518.8 211.3 519.9 209.2 C520.9 207.1 521.8 205.7 522.9 203.8 C524.0 202.0 524.8 200.6 525.9 198.8 C527.0 197.0 527.8 195.7 528.9 194.1 C530.0 192.5 530.8 191.2 531.9 189.8 C533.0 188.4 533.8 187.5 534.9 186.3 C536.0 185.1 536.8 184.2 537.9 183.1 C539.0 182.1 539.8 181.2 540.9 180.4 C542.0 179.6 542.8 179.2 543.9 178.9 C545.0 178.5 545.8 178.4 546.9 178.5 C548.0 178.5 548.8 178.6 549.9 179.0 C551.0 179.5 551.8 180.0 552.9 180.9 C554.0 181.9 554.9 182.9 555.9 184.2 C557.0 185.6 557.9 186.8 558.9 188.5 C560.0 190.1 560.9 191.6 561.9 193.6 C563.0 195.5 563.9 197.2 565.0 199.3 C566.0 201.3 566.9 202.8 568.0 204.7 C569.0 206.6 569.9 208.1 571.0 209.8 C572.0 211.6 572.9 212.9 574.0 214.3 C575.1 215.7 575.9 216.7 577.0 217.8 C578.1 219.0 578.9 219.7 580.0 220.7 C581.1 221.6 581.9 222.4 583.0 223.3 C584.1 224.2 584.9 224.8 586.0 225.7 C587.1 226.5 587.9 227.1 589.0 227.9 C590.1 228.8 590.9 229.4 592.0 230.3 C593.1 231.3 593.9 232.0 595.0 233.1 C596.1 234.2 596.9 235.0 598.0 236.4 C599.1 237.7 599.9 238.9 601.0 240.6 C602.1 242.3 603.0 243.8 604.0 245.7 C605.1 247.7 606.0 249.3 607.0 251.4 C608.1 253.5 609.0 255.2 610.0 257.3 C611.1 259.5 612.0 261.3 613.1 263.4 C614.1 265.5 615.0 267.1 616.1 269.1 C617.1 271.1 618.0 272.5 619.1 274.5 C620.1 276.5 621.0 278.2 622.1 280.4 C623.2 282.7 624.0 284.4 625.1 287.0 C626.2 289.7 627.0 291.8 628.1 294.9 C629.2 298.1 630.0 300.8 631.1 304.4 C632.2 308.0 633.0 311.1 634.1 315.0 C635.2 318.9 636.0 322.1 637.1 325.9 C638.2 329.8 639.0 332.8 640.1 336.4 C641.2 340.0 642.0 342.8 643.1 345.9 C644.2 348.9 645.0 351.1 646.1 353.6 C647.2 356.1 648.0 357.9 649.1 359.9 C650.2 361.8 651.0 363.0 652.1 364.6 C653.2 366.1 654.1 367.3 655.1 368.5 C656.2 369.7 657.1 370.4 658.1 371.2 C659.2 372.0 660.1 372.5 661.1 372.9 C662.2 373.3 663.1 373.5 664.2 373.6 C665.2 373.7 666.1 373.7 667.2 373.4 C668.2 373.1 669.1 372.6 670.2 372.1 C671.2 371.5 672.1 371.0 673.2 370.2 C674.3 369.5 675.1 368.6 676.2 367.9 C677.3 367.2 678.1 366.6 679.2 366.2 C680.3 365.8 681.1 365.6 682.2 365.6 C683.3 365.5 684.1 365.6 685.2 365.8 C686.3 366.0 687.1 366.3 688.2 366.9 C689.3 367.5 690.1 368.2 691.2 369.0 C692.3 369.9 693.1 370.7 694.2 371.7 C695.3 372.7 696.1 373.4 697.2 374.6 C698.3 375.7 699.1 376.7 700.2 378.0 C701.3 379.3 702.1 380.4 703.2 381.9 C704.3 383.4 705.2 384.7 706.2 386.2 C707.3 387.7 708.2 389.0 709.2 390.4 C710.3 391.8 711.2 392.9 712.2 394.2 C713.3 395.5 714.2 396.3 715.3 397.6 C716.3 398.9 717.2 399.9 718.3 401.3 C719.3 402.7 720.2 403.8 721.3 405.4 C722.3 406.9 723.2 408.1 724.3 409.9 C725.4 411.6 726.2 413.1 727.3 415.2 C728.4 417.2 729.2 419.0 730.3 421.2 C731.4 423.4 732.2 425.0 733.3 427.2 C734.4 429.4 735.2 431.1 736.3 433.2 C737.4 435.4 738.2 437.1 739.3 439.2 C740.4 441.4 741.2 443.0 742.3 445.1 C743.4 447.2 744.2 448.8 745.3 450.8 C746.4 452.8 747.2 454.4 748.3 456.4 C749.4 458.4 750.2 459.9 751.3 461.9 C752.4 464.0 753.2 465.5 754.3 467.5 C755.4 469.5 756.3 471.1 757.3 473.2 C758.4 475.4 759.3 477.1 760.3 479.4 C761.4 481.7 762.3 483.6 763.3 486.0 C764.4 488.5 765.3 490.4 766.4 493.0 C767.4 495.6 768.3 497.5 769.4 500.4 C770.4 503.3 771.3 505.8 772.4 509.2 C773.4 512.7 774.3 515.6 775.4 519.6 C776.5 523.6 777.3 526.9 778.4 531.4 C779.5 536.0 780.3 539.9 781.4 545.1 C782.5 550.4 783.3 554.8 784.4 560.4 C785.5 566.0 786.3 570.7 787.4 576.2 C788.5 581.6 789.3 585.6 790.4 590.7 C791.5 595.8 792.3 599.7 793.4 604.5 C794.5 609.3 795.3 612.8 796.4 617.2 C797.5 621.7 798.3 624.9 799.4 629.1 C800.5 633.2 801.3 636.1 802.4 640.2 C803.5 644.3 804.3 647.7 805.4 651.9 C806.5 656.0 807.4 659.2 808.4 663.2 C809.5 667.1 810.4 670.1 811.4 673.7 C812.5 677.3 813.4 680.1 814.4 683.3 C815.5 686.6 816.4 688.8 817.5 691.6 C818.5 694.5 819.4 696.6 820.5 699.2 C821.5 701.9 822.4 704.0 823.5 706.5 C824.5 709.1 825.4 711.1 826.5 713.6 C827.6 716.0 828.4 718.0 829.5 720.2 C830.6 722.4 831.4 724.0 832.5 725.8 C833.6 727.6 834.4 728.7 835.5 729.9 C836.6 731.1 837.4 731.8 838.5 732.4 C839.6 733.1 840.4 733.4 841.5 733.7 C842.6 733.9 843.4 733.8 844.5 733.7 C845.6 733.6 846.4 733.5 847.5 733.1 C848.6 732.6 849.4 732.2 850.5 731.4 C851.6 730.6 852.4 729.9 853.5 728.8 C854.6 727.8 855.5 726.9 856.5 725.8 C857.6 724.6 858.5 723.6 859.5 722.4 C860.6 721.2 861.5 720.2 862.5 719.1 C863.6 718.0 864.5 717.3 865.6 716.3 C866.6 715.4 867.5 714.7 868.6 713.8 C869.6 712.9 870.5 712.2 871.6 711.2 C872.6 710.2 873.5 709.4 874.6 708.4 C875.7 707.4 876.5 706.6 877.6 705.7 C878.7 704.8 879.5 704.3 880.6 703.4 C881.7 702.4 882.5 701.7 883.6 700.7 C884.7 699.6 885.5 698.7 886.6 697.4 C887.7 696.1 888.5 695.0 889.6 693.4 C890.7 691.7 891.5 690.2 892.6 688.2 C893.7 686.1 894.5 684.1 895.6 681.8 C896.7 679.6 897.5 677.8 898.6 675.7 C899.7 673.6 900.5 672.1 901.6 670.4 C902.7 668.6 903.5 667.4 904.6 666.1 C905.7 664.7 906.6 663.9 907.6 662.8 C908.7 661.8 909.6 661.3 910.6 660.3 C911.7 659.4 912.6 658.6 913.6 657.5 C914.7 656.5 915.6 655.6 916.7 654.5 C917.7 653.5 918.6 652.6 919.7 651.6 C920.7 650.6 921.6 649.7 922.7 648.7 C923.7 647.8 924.6 647.1 925.7 646.4 C926.8 645.8 927.6 645.5 928.7 645.2 C929.8 644.9 930.6 644.9 931.7 644.9 C932.8 644.9 933.6 644.9 934.7 645.2 C935.8 645.4 936.6 645.8 937.7 646.4 C938.8 647.0 939.6 647.6 940.7 648.6 C941.8 649.5 942.6 650.4 943.7 651.8 C944.8 653.1 945.6 654.4 946.7 656.0 C947.8 657.7 948.6 659.3 949.7 661.1 C950.8 663.0 951.6 664.4 952.7 666.3 C953.8 668.3 954.6 669.7 955.7 671.8 C956.8 673.8 957.7 675.4 958.7 677.7 C959.8 680.0 960.7 681.9 961.7 684.4 C962.8 686.9 963.7 688.9 964.7 691.6 C965.8 694.4 966.7 696.6 967.8 699.7 C968.8 702.7 969.7 705.3 970.8 708.5 C971.8 711.8 972.7 714.4 973.8 717.8 C974.8 721.1 975.7 723.6 976.8 727.0 C977.9 730.4 978.7 733.2 979.8 736.8 C980.9 740.5 981.7 743.4 982.8 747.1 C983.9 750.8 984.7 753.7 985.8 757.4 C986.9 761.0 987.7 763.9 988.8 767.4 C989.9 770.9 990.7 773.5 991.8 776.7 C992.9 779.9 993.7 782.2 994.8 785.1 C995.9 788.0 996.7 789.9 997.8 792.9 C998.9 795.8 999.7 798.3 1000.8 801.5 C1001.9 804.8 1002.7 807.4 1003.8 811.2 C1004.9 814.9 1005.7 817.9 1006.8 822.1 C1007.9 826.3 1008.8 829.8 1009.8 834.4 C1010.9 839.1 1011.8 843.6 1012.8 848.1 C1013.9 852.6 1014.8 855.8 1015.8 859.3 C1016.9 862.8 1017.8 865.2 1018.9 867.8 C1019.9 870.3 1020.8 871.9 1021.9 873.5 C1022.9 875.1 1023.8 875.9 1024.9 876.5 C1025.9 877.1 1026.8 876.7 1027.9 876.8 C1029.0 876.8 1029.8 876.8 1030.9 876.8 C1032.0 876.7 1032.8 877.1 1033.9 876.6 C1035.0 876.0 1035.8 875.2 1036.9 873.7 C1038.0 872.1 1038.8 870.6 1039.9 868.0 C1041.0 865.5 1041.8 863.2 1042.9 859.7 C1044.0 856.2 1044.8 853.0 1045.9 848.6 C1047.0 844.1 1047.8 839.6 1048.9 834.9 C1050.0 830.2 1050.8 826.6 1051.9 822.3 C1053.0 818.0 1053.8 814.6 1054.9 810.8 C1056.0 806.9 1056.8 804.1 1057.9 800.8 C1059.0 797.6 1059.9 795.2 1060.9 792.6 C1062.0 790.0 1062.9 788.4 1063.9 786.3 C1065.0 784.2 1065.9 782.8 1066.9 781.1 C1068.0 779.4 1068.9 778.3 1070.0 776.9 C1071.0 775.4 1071.9 774.4 1073.0 773.0 C1074.0 771.7 1074.9 770.7 1076.0 769.3 C1077.0 768.0 1077.9 767.0 1079.0 765.7 C1080.1 764.3 1080.9 763.3 1082.0 761.9 C1083.1 760.6 1083.9 759.5 1085.0 758.2 C1086.1 756.9 1086.9 755.9 1088.0 754.8 C1089.1 753.6 1089.9 752.7 1091.0 751.7 C1092.1 750.7 1092.9 750.0 1094.0 749.2 C1095.1 748.4 1095.9 747.9 1097.0 747.2 C1098.1 746.6 1098.9 746.1 1100.0 745.5 C1101.1 745.0 1101.9 744.6 1103.0 744.0 C1104.1 743.5 1104.9 743.2 1106.0 742.6 C1107.1 742.1 1107.9 741.6 1109.0 740.9 C1110.1 740.2 1111.0 739.6 1112.0 738.7 C1113.1 737.8 1114.0 737.0 1115.0 735.9 C1116.1 734.9 1117.0 734.0 1118.0 732.8 C1119.1 731.6 1120.0 730.5 1121.1 729.2 C1122.1 728.0 1123.0 727.1 1124.1 725.9 C1125.1 724.8 1126.0 724.0 1127.1 723.0 C1128.1 722.1 1129.0 721.4 1130.1 720.5 C1131.2 719.7 1132.0 719.0 1133.1 718.2 C1134.2 717.4 1135.0 716.9 1136.1 716.1 C1137.2 715.3 1138.0 714.6 1139.1 713.7 C1140.2 712.8 1141.0 712.1 1142.1 711.1 C1143.2 710.1 1144.0 709.3 1145.1 708.3 C1146.2 707.4 1147.0 706.6 1148.1 705.7 C1149.2 704.8 1150.0 704.1 1151.1 703.2 C1152.2 702.4 1153.0 701.8 1154.1 701.0 C1155.2 700.2 1156.0 699.7 1157.1 698.9 C1158.2 698.2 1159.1 697.6 1160.1 697.0 C1161.2 696.3 1162.1 695.7 1163.1 695.1 C1164.2 694.5 1165.1 694.1 1166.1 693.6 C1167.2 693.0 1168.1 692.7 1169.2 692.2 C1170.2 691.7 1171.1 691.4 1172.2 691.0 C1173.2 690.7 1174.1 690.4 1175.2 690.1 C1176.2 689.8 1177.1 689.8 1178.2 689.5 C1179.3 689.2 1180.1 688.9 1181.2 688.4 C1182.3 688.0 1183.1 687.5 1184.2 686.9 C1185.3 686.2 1186.1 685.6 1187.2 684.8 C1188.3 684.0 1189.1 683.3 1190.2 682.5 C1191.3 681.6 1192.1 680.8 1193.2 679.9 C1194.3 679.1 1195.1 678.4 1196.2 677.7 C1197.3 677.0 1198.1 676.4 1199.2 675.8 C1200.3 675.2 1201.1 674.8 1202.2 674.2 C1203.3 673.6 1204.1 673.1 1205.2 672.5 C1206.3 671.9 1207.1 671.4 1208.2 670.7 C1209.3 670.1 1210.2 669.6 1211.2 669.0 C1212.3 668.4 1213.2 667.9 1214.2 667.4 C1215.3 666.9 1216.2 666.5 1217.2 666.1 C1218.3 665.8 1219.2 665.6 1220.3 665.3 C1221.3 665.1 1222.2 665.0 1223.3 664.8 C1224.3 664.5 1225.2 664.2 1226.3 663.8 C1227.3 663.4 1228.2 663.0 1229.3 662.5 C1230.4 661.9 1231.2 661.4 1232.3 660.8 C1233.4 660.1 1234.2 659.5 1235.3 658.8 C1236.4 658.1 1237.2 657.5 1238.3 656.8 C1239.4 656.2 1240.2 655.7 1241.3 655.2 C1242.4 654.7 1243.2 654.5 1244.3 654.1 C1245.4 653.7 1246.2 653.5 1247.3 653.2 C1248.4 652.9 1249.2 652.6 1250.3 652.3 C1251.4 652.1 1252.2 651.9 1253.3 651.6 C1254.4 651.4 1255.2 651.2 1256.3 650.9 C1257.4 650.7 1258.2 650.5 1259.3 650.3 C1260.4 650.1 1261.3 650.1 1262.3 650.0 C1263.4 650.0 1264.3 650.0 1265.3 650.0 C1266.4 650.1 1267.3 650.3 1268.3 650.4 C1269.4 650.5 1270.3 650.5 1271.4 650.6 C1272.4 650.7 1273.3 650.8 1274.4 650.8 C1275.4 650.8 1276.3 650.8 1277.4 650.6 C1278.4 650.4 1279.3 650.1 1280.4 649.7 C1281.5 649.2 1282.3 648.7 1283.4 648.0 C1284.5 647.3 1285.3 646.8 1286.4 646.0 C1287.5 645.2 1288.3 644.5 1289.4 643.6 C1290.5 642.7 1291.3 641.8 1292.4 640.8 C1293.5 639.8 1294.3 639.0 1295.4 638.0 C1296.5 637.0 1297.3 636.2 1298.4 635.2 C1299.5 634.1 1300.3 633.5 1301.4 632.4 C1302.5 631.2 1303.3 630.3 1304.4 628.9 C1305.5 627.6 1306.3 626.3 1307.4 624.8 C1308.5 623.3 1309.3 622.3 1310.4 620.7 C1311.5 619.1 1312.4 617.8 1313.4 616.0 C1314.5 614.2 1315.4 612.6 1316.4 610.8 C1317.5 609.0 1318.4 607.7 1319.4 606.0 C1320.5 604.3 1321.4 603.3 1322.5 601.6 C1323.5 599.9 1324.4 598.3 1325.5 596.5 C1326.5 594.6 1327.4 593.1 1328.5 591.1 C1329.5 589.1 1330.4 587.5 1331.5 585.3 C1332.6 583.2 1333.4 581.5 1334.5 579.2 C1335.6 577.0 1336.4 575.2 1337.5 572.9 C1338.6 570.7 1339.4 569.0 1340.5 566.8 C1341.6 564.7 1342.4 563.1 1343.5 561.0 C1344.6 559.0 1345.4 557.4 1346.5 555.4 C1347.6 553.5 1348.4 552.0 1349.5 550.1 C1350.6 548.1 1351.4 546.6 1352.5 544.7 C1353.6 542.8 1354.4 541.4 1355.5 539.5 C1356.6 537.7 1357.4 536.3 1358.5 534.6 C1359.6 532.8 1360.4 531.5 1361.5 529.8 C1362.6 528.2 1363.5 527.0 1364.5 525.3 C1365.6 523.7 1366.5 522.4 1367.5 520.6 C1368.6 518.8 1369.5 517.4 1370.5 515.5 C1371.6 513.5 1372.5 511.9 1373.6 509.8 C1374.6 507.7 1375.5 506.0 1376.6 503.8 C1377.6 501.6 1378.5 499.7 1379.6 497.4 C1380.6 495.1 1381.5 493.3 1382.6 491.1 C1383.7 488.8 1384.5 487.1 1385.6 484.8 C1386.7 482.6 1387.5 480.8 1388.6 478.5 C1389.7 476.1 1390.5 474.3 1391.6 471.8 C1392.7 469.4 1393.5 467.4 1394.6 464.8 C1395.7 462.2 1396.5 460.1 1397.6 457.2 C1398.7 454.4 1399.5 452.0 1400.6 449.1 C1401.7 446.1 1402.5 443.7 1403.6 440.7 C1404.7 437.7 1405.5 435.4 1406.6 432.2 C1407.7 429.0 1408.5 426.2 1409.6 422.9 C1410.7 419.5 1411.5 417.0 1412.6 413.7 C1413.7 410.5 1414.6 408.0 1415.6 404.9 C1416.7 401.7 1417.6 399.3 1418.6 396.2 C1419.7 393.2 1420.6 390.8 1421.6 388.0 C1422.7 385.3 1423.6 383.4 1424.7 381.0 C1425.7 378.5 1426.6 376.6 1427.7 374.3 C1428.7 372.0 1429.6 370.3 1430.7 368.3 C1431.7 366.2 1432.6 364.8 1433.7 362.9 C1434.8 361.1 1435.6 359.7 1436.7 358.0 C1437.8 356.4 1438.6 355.2 1439.7 353.8 C1440.8 352.4 1441.6 351.5 1442.7 350.4 C1443.8 349.2 1444.6 348.3 1445.7 347.3 C1446.8 346.3 1447.6 345.6 1448.7 344.9 C1449.8 344.1 1450.6 343.6 1451.7 343.0 C1452.8 342.4 1453.6 341.9 1454.7 341.4 C1455.8 340.9 1456.6 340.6 1457.7 340.2 C1458.8 339.8 1459.6 339.6 1460.7 339.2 C1461.8 338.8 1462.7 338.5 1463.7 338.0 C1464.8 337.5 1465.7 337.0 1466.7 336.4 C1467.8 335.9 1468.7 335.4 1469.7 334.7 C1470.8 334.0 1471.7 333.5 1472.8 332.7 C1473.8 331.9 1474.7 331.2 1475.8 330.4 C1476.8 329.7 1477.7 329.1 1478.8 328.4 C1479.8 327.7 1480.7 327.3 1481.8 326.7 C1482.9 326.1 1483.7 325.6 1484.8 325.1 C1485.9 324.6 1486.7 324.3 1487.8 323.9 C1488.9 323.5 1489.7 323.1 1490.8 322.9 C1491.9 322.6 1492.7 322.5 1493.8 322.5 C1494.9 322.5 1495.7 322.5 1496.8 322.8 C1497.9 323.0 1498.7 323.2 1499.8 323.8 C1500.9 324.4 1501.7 325.1 1502.8 326.0 C1503.9 326.9 1504.7 327.4 1505.8 328.6 C1506.9 329.8 1508.3 331.9 1508.8 332.6" stroke="#ee6892" stroke-width="1" fill="none" stroke-linejoin="round"/>
<path d="M15.6 806.5 C16.1 805.6 17.2 803.3 18.1 801.5 C19.0 799.7 19.7 798.3 20.6 796.5 C21.5 794.7 22.2 793.3 23.1 791.5 C24.0 789.7 24.7 788.2 25.6 786.5 C26.5 784.8 27.2 783.6 28.1 782.2 C29.0 780.8 29.7 779.8 30.6 778.7 C31.5 777.7 32.2 777.2 33.1 776.3 C34.0 775.5 34.7 774.9 35.6 774.1 C36.5 773.3 37.2 772.6 38.1 771.7 C39.0 770.8 39.7 770.1 40.6 769.1 C41.5 768.1 42.2 767.2 43.1 766.0 C44.0 764.8 44.7 763.6 45.6 762.4 C46.5 761.2 47.2 760.1 48.1 759.4 C49.0 758.6 49.7 758.3 50.6 758.3 C51.6 758.3 52.3 758.7 53.2 759.2 C54.1 759.7 54.8 760.6 55.7 761.2 C56.6 761.9 57.3 762.4 58.2 762.7 C59.1 763.1 59.8 763.3 60.7 763.3 C61.6 763.3 62.3 763.2 63.2 763.0 C64.1 762.8 64.8 762.5 65.7 762.2 C66.6 761.9 67.3 761.6 68.2 761.2 C69.1 760.8 69.8 760.5 70.7 760.0 C71.6 759.6 72.3 759.2 73.2 758.8 C74.1 758.4 74.8 758.1 75.7 757.7 C76.6 757.4 77.3 757.2 78.2 756.9 C79.1 756.7 79.8 756.6 80.7 756.4 C81.6 756.1 82.3 756.2 83.2 755.8 C84.1 755.4 84.8 754.8 85.7 753.9 C86.6 753.1 87.3 752.2 88.2 750.8 C89.1 749.5 89.8 748.1 90.7 746.7 C91.6 745.2 92.3 744.5 93.2 742.7 C94.1 740.9 94.8 739.4 95.7 736.8 C96.6 734.3 97.3 731.9 98.2 728.4 C99.1 725.0 99.8 721.5 100.7 717.7 C101.6 713.9 102.3 711.0 103.2 707.4 C104.1 703.9 104.8 701.3 105.7 698.0 C106.6 694.7 107.3 692.3 108.2 689.2 C109.1 686.1 109.8 683.7 110.7 680.8 C111.6 677.9 112.3 675.7 113.2 673.0 C114.1 670.4 114.8 668.4 115.7 665.9 C116.6 663.3 117.3 661.5 118.2 658.9 C119.1 656.3 119.8 654.3 120.7 651.4 C121.6 648.6 122.3 646.2 123.2 643.0 C124.1 639.8 124.8 637.1 125.7 633.7 C126.6 630.3 127.3 627.5 128.2 624.0 C129.1 620.4 129.8 617.6 130.7 613.8 C131.6 610.0 132.3 606.8 133.2 602.9 C134.1 599.1 134.8 596.0 135.7 592.3 C136.6 588.6 137.3 585.7 138.2 582.6 C139.1 579.5 139.8 577.6 140.7 575.2 C141.6 572.8 142.3 571.1 143.2 569.2 C144.1 567.2 144.8 566.1 145.7 564.4 C146.6 562.8 147.3 561.6 148.2 560.1 C149.1 558.6 149.8 557.4 150.7 556.1 C151.6 554.7 152.3 553.7 153.2 552.4 C154.1 551.2 154.8 550.1 155.7 549.3 C156.6 548.4 157.3 547.9 158.2 547.6 C159.1 547.4 159.8 547.4 160.7 547.7 C161.6 548.0 162.3 548.7 163.2 549.3 C164.1 549.8 164.8 550.4 165.7 550.8 C166.6 551.3 167.3 551.5 168.2 551.8 C169.1 552.1 169.8 552.1 170.7 552.3 C171.6 552.5 172.3 552.7 173.2 552.9 C174.1 553.1 174.8 553.2 175.7 553.3 C176.6 553.3 177.3 553.4 178.2 553.4 C179.1 553.3 179.8 553.3 180.7 553.2 C181.6 553.1 182.3 553.0 183.2 552.9 C184.1 552.8 184.8 552.8 185.7 552.7 C186.6 552.6 187.3 552.5 188.2 552.3 C189.1 552.1 189.8 551.9 190.7 551.6 C191.6 551.3 192.3 551.0 193.2 550.6 C194.1 550.2 194.8 549.8 195.7 549.5 C196.6 549.2 197.3 549.1 198.2 548.7 C199.1 548.4 199.8 548.3 200.7 547.6 C201.6 546.9 202.3 546.2 203.2 545.1 C204.1 543.9 204.8 542.6 205.7 541.1 C206.6 539.5 207.3 538.1 208.2 536.5 C209.1 534.9 209.8 533.8 210.7 532.3 C211.6 530.9 212.3 529.8 213.2 528.5 C214.1 527.1 214.8 526.0 215.7 524.8 C216.6 523.5 217.3 522.6 218.2 521.5 C219.1 520.4 219.8 519.7 220.7 518.7 C221.6 517.7 222.3 517.1 223.2 516.2 C224.1 515.3 224.8 514.5 225.7 513.5 C226.6 512.6 227.3 511.8 228.2 510.7 C229.1 509.7 229.8 508.9 230.7 507.7 C231.6 506.5 232.3 505.6 233.2 504.3 C234.1 503.0 234.8 502.0 235.7 500.6 C236.6 499.2 237.3 498.1 238.2 496.5 C239.1 495.0 239.8 493.8 240.7 492.1 C241.6 490.4 242.3 488.9 243.2 487.1 C244.1 485.3 244.8 483.7 245.7 481.8 C246.6 479.9 247.3 478.4 248.2 476.6 C249.1 474.7 249.8 473.2 250.7 471.4 C251.6 469.6 252.3 468.1 253.2 466.3 C254.1 464.5 254.8 463.1 255.7 461.3 C256.6 459.5 257.3 458.1 258.2 456.4 C259.1 454.6 259.8 453.3 260.7 451.6 C261.6 449.9 262.3 448.6 263.2 447.0 C264.1 445.4 264.8 444.1 265.7 442.6 C266.6 441.0 267.3 439.7 268.3 438.2 C269.2 436.7 269.9 435.7 270.8 434.2 C271.7 432.7 272.4 431.5 273.3 429.8 C274.2 428.1 274.9 426.6 275.8 424.7 C276.7 422.9 277.4 421.2 278.3 419.4 C279.2 417.6 279.9 416.2 280.8 414.7 C281.7 413.2 282.4 412.4 283.3 411.3 C284.2 410.1 284.9 409.4 285.8 408.5 C286.7 407.5 287.4 406.9 288.3 406.0 C289.2 405.0 289.9 404.3 290.8 403.2 C291.7 402.1 292.4 401.1 293.3 400.0 C294.2 398.8 294.9 397.9 295.8 396.7 C296.7 395.6 297.4 394.7 298.3 393.5 C299.2 392.4 299.9 391.5 300.8 390.3 C301.7 389.1 302.4 388.1 303.3 386.6 C304.2 385.2 304.9 384.0 305.8 382.4 C306.7 380.7 307.4 379.3 308.3 377.5 C309.2 375.7 309.9 374.1 310.8 372.5 C311.7 370.9 312.4 369.7 313.3 368.4 C314.2 367.1 314.9 366.3 315.8 365.5 C316.7 364.6 317.4 364.4 318.3 363.7 C319.2 363.1 319.9 362.7 320.8 361.8 C321.7 361.0 322.4 360.2 323.3 359.1 C324.2 358.0 324.9 357.0 325.8 355.7 C326.7 354.4 327.4 353.3 328.3 351.9 C329.2 350.5 329.9 349.4 330.8 347.8 C331.7 346.3 332.4 345.1 333.3 343.4 C334.2 341.8 334.9 340.4 335.8 338.8 C336.7 337.1 337.4 335.8 338.3 334.3 C339.2 332.7 339.9 331.5 340.8 330.2 C341.7 328.8 342.4 327.7 343.3 326.5 C344.2 325.4 344.9 324.5 345.8 323.6 C346.7 322.6 347.4 321.8 348.3 321.2 C349.2 320.6 349.9 320.3 350.8 320.1 C351.7 319.8 352.4 319.9 353.3 319.8 C354.2 319.8 354.9 320.0 355.8 319.9 C356.7 319.7 357.4 319.3 358.3 319.0 C359.2 318.6 359.9 318.2 360.8 318.0 C361.7 317.9 362.4 317.8 363.3 318.2 C364.2 318.7 364.9 319.7 365.8 320.7 C366.7 321.8 367.4 323.1 368.3 324.3 C369.2 325.5 369.9 326.5 370.8 327.6 C371.7 328.6 372.4 329.0 373.3 330.1 C374.2 331.2 374.9 332.0 375.8 333.5 C376.7 335.1 377.4 336.5 378.3 338.8 C379.2 341.1 379.9 343.4 380.8 346.2 C381.7 349.1 382.4 351.5 383.3 354.5 C384.2 357.4 384.9 359.9 385.8 362.7 C386.7 365.6 387.4 367.8 388.3 370.2 C389.2 372.7 389.9 374.5 390.8 376.6 C391.7 378.7 392.4 380.3 393.3 382.1 C394.2 383.9 394.9 385.1 395.8 386.6 C396.7 388.2 397.4 389.3 398.3 390.5 C399.2 391.7 399.9 392.6 400.8 393.5 C401.7 394.5 402.4 395.4 403.3 395.8 C404.2 396.3 404.9 396.4 405.8 396.2 C406.7 396.0 407.4 395.5 408.3 394.5 C409.2 393.4 409.9 392.0 410.8 390.4 C411.7 388.8 412.4 387.4 413.3 385.6 C414.2 383.9 414.9 382.3 415.8 380.5 C416.7 378.8 417.4 377.7 418.3 375.8 C419.2 373.9 419.9 372.4 420.8 370.0 C421.7 367.6 422.4 365.8 423.3 362.7 C424.2 359.6 424.9 356.6 425.8 352.9 C426.7 349.1 427.4 346.0 428.3 341.9 C429.2 337.7 429.9 334.2 430.8 329.9 C431.7 325.5 432.4 322.2 433.3 317.9 C434.2 313.5 434.9 310.1 435.8 305.6 C436.7 301.2 437.4 297.6 438.3 293.1 C439.2 288.5 439.9 284.9 440.8 280.3 C441.7 275.7 442.4 272.0 443.3 267.5 C444.2 263.0 444.9 259.6 445.8 255.4 C446.7 251.3 447.4 248.2 448.3 244.4 C449.2 240.6 449.9 237.8 450.8 234.4 C451.7 231.0 452.4 228.6 453.3 225.6 C454.2 222.6 454.9 220.4 455.8 217.6 C456.7 214.9 457.4 212.9 458.3 210.4 C459.2 208.0 459.9 206.1 460.8 204.0 C461.7 201.9 462.4 200.4 463.3 198.7 C464.2 197.0 464.9 195.9 465.8 194.5 C466.7 193.1 467.4 192.1 468.3 190.9 C469.2 189.8 469.9 188.8 470.8 188.0 C471.7 187.2 472.4 186.6 473.3 186.4 C474.2 186.2 474.9 186.3 475.8 186.8 C476.7 187.2 477.4 187.9 478.3 188.9 C479.2 189.9 479.9 191.2 480.8 192.4 C481.7 193.6 482.4 194.5 483.3 195.6 C484.2 196.6 485.0 197.5 485.9 198.3 C486.8 199.1 487.5 199.5 488.4 199.9 C489.3 200.2 490.0 200.4 490.9 200.4 C491.8 200.4 492.5 200.1 493.4 200.0 C494.3 199.8 495.0 199.6 495.9 199.6 C496.8 199.5 497.5 199.6 498.4 199.7 C499.3 199.9 500.0 200.0 500.9 200.4 C501.8 200.7 502.5 201.1 503.4 201.7 C504.3 202.2 505.0 202.8 505.9 203.7 C506.8 204.5 507.5 205.5 508.4 206.3 C509.3 207.1 510.0 207.8 510.9 208.2 C511.8 208.6 512.5 208.9 513.4 208.5 C514.3 208.1 515.0 207.4 515.9 206.1 C516.8 204.8 517.5 203.4 518.4 201.2 C519.3 199.1 520.0 196.7 520.9 194.0 C521.8 191.4 522.5 189.3 523.4 186.3 C524.3 183.3 525.0 181.1 525.9 177.2 C526.8 173.3 527.5 170.0 528.4 164.8 C529.3 159.7 530.0 154.9 530.9 148.6 C531.8 142.3 532.5 135.9 533.4 129.9 C534.3 123.9 535.0 119.4 535.9 115.2 C536.8 111.0 537.5 108.7 538.4 106.7 C539.3 104.8 540.0 104.9 540.9 104.5 C541.8 104.1 542.5 104.5 543.4 104.5 C544.3 104.5 545.0 103.8 545.9 104.5 C546.8 105.2 547.5 105.9 548.4 108.4 C549.3 111.0 550.0 113.8 550.9 118.6 C551.8 123.4 552.5 128.7 553.4 135.0 C554.3 141.3 555.0 147.4 555.9 153.7 C556.8 159.9 557.5 164.2 558.4 169.8 C559.3 175.3 560.0 179.3 560.9 184.5 C561.8 189.7 562.5 193.5 563.4 198.8 C564.3 204.1 565.0 208.7 565.9 214.1 C566.8 219.5 567.5 223.8 568.4 228.9 C569.3 233.9 570.0 237.4 570.9 242.0 C571.8 246.6 572.5 250.0 573.4 254.2 C574.3 258.4 575.0 261.6 575.9 265.4 C576.8 269.1 577.5 271.8 578.4 275.2 C579.3 278.5 580.0 281.0 580.9 284.0 C581.8 287.0 582.5 289.1 583.4 291.8 C584.3 294.6 585.0 296.6 585.9 299.3 C586.8 301.9 587.5 303.8 588.4 306.5 C589.3 309.1 590.0 311.2 590.9 314.0 C591.8 316.7 592.5 319.0 593.4 321.6 C594.3 324.2 595.0 326.2 595.9 328.5 C596.8 330.8 597.5 332.4 598.4 334.3 C599.3 336.2 600.0 337.4 600.9 339.0 C601.8 340.5 602.5 341.7 603.4 343.2 C604.3 344.6 605.0 345.7 605.9 346.9 C606.8 348.2 607.5 349.3 608.4 350.3 C609.3 351.2 610.0 351.6 610.9 352.3 C611.8 353.1 612.5 353.4 613.4 354.4 C614.3 355.4 615.0 356.2 615.9 357.9 C616.8 359.6 617.5 361.3 618.4 363.7 C619.3 366.1 620.0 368.2 620.9 371.1 C621.8 374.0 622.5 376.4 623.4 379.8 C624.3 383.2 625.0 386.1 625.9 389.8 C626.8 393.6 627.5 396.8 628.4 400.7 C629.3 404.6 630.0 407.6 630.9 411.5 C631.8 415.4 632.5 418.6 633.4 422.4 C634.3 426.1 635.0 429.0 635.9 432.5 C636.8 436.0 637.5 438.8 638.4 441.8 C639.3 444.7 640.0 447.0 640.9 449.0 C641.8 450.9 642.5 452.0 643.4 452.7 C644.3 453.4 645.0 453.5 645.9 452.7 C646.8 451.9 647.5 450.3 648.4 448.3 C649.3 446.3 650.0 444.4 650.9 441.6 C651.8 438.8 652.5 436.0 653.4 432.7 C654.3 429.4 655.0 426.7 655.9 423.3 C656.8 419.8 657.5 416.9 658.4 413.4 C659.3 410.0 660.0 407.3 660.9 404.1 C661.8 400.8 662.5 398.4 663.4 395.2 C664.3 392.1 665.0 389.8 665.9 386.6 C666.8 383.4 667.5 380.9 668.4 377.5 C669.3 374.1 670.0 371.3 670.9 367.6 C671.8 364.0 672.5 360.9 673.4 357.0 C674.3 353.1 675.0 350.0 675.9 345.9 C676.8 341.8 677.5 338.3 678.4 334.1 C679.3 329.9 680.0 326.4 680.9 322.8 C681.8 319.2 682.5 316.7 683.4 314.2 C684.3 311.7 685.0 310.0 685.9 308.9 C686.8 307.7 687.5 307.7 688.4 307.6 C689.3 307.4 690.0 307.6 690.9 308.0 C691.8 308.4 692.5 309.0 693.4 309.8 C694.3 310.6 695.0 311.1 695.9 312.4 C696.8 313.8 697.5 314.8 698.4 317.2 C699.3 319.5 700.0 322.0 700.9 325.5 C701.8 329.0 702.6 332.3 703.5 336.8 C704.4 341.2 705.1 345.4 706.0 350.1 C706.9 354.8 707.6 358.5 708.5 362.8 C709.4 367.0 710.1 369.6 711.0 373.7 C711.9 377.8 712.6 380.8 713.5 385.5 C714.4 390.2 715.1 394.1 716.0 399.6 C716.9 405.1 717.6 410.2 718.5 416.0 C719.4 421.8 720.1 426.1 721.0 431.8 C721.9 437.6 722.6 441.8 723.5 447.8 C724.4 453.9 725.1 458.7 726.0 465.3 C726.9 471.9 727.6 477.8 728.5 484.6 C729.4 491.5 730.1 496.8 731.0 503.4 C731.9 509.9 732.6 514.7 733.5 521.1 C734.4 527.4 735.1 532.4 736.0 538.6 C736.9 544.7 737.6 548.9 738.5 555.2 C739.4 561.6 740.1 567.1 741.0 573.8 C741.9 580.6 742.6 586.2 743.5 592.7 C744.4 599.2 745.1 604.4 746.0 609.9 C746.9 615.3 747.6 618.9 748.5 623.0 C749.4 627.1 750.1 629.3 751.0 632.6 C751.9 636.0 752.6 638.9 753.5 641.6 C754.4 644.4 755.1 646.2 756.0 647.9 C756.9 649.6 757.6 650.2 758.5 651.1 C759.4 652.1 760.1 652.4 761.0 653.2 C761.9 654.0 762.6 655.0 763.5 655.6 C764.4 656.2 765.1 656.5 766.0 656.5 C766.9 656.5 767.6 656.4 768.5 655.7 C769.4 655.0 770.1 654.0 771.0 652.9 C771.9 651.8 772.6 650.3 773.5 649.7 C774.4 649.0 775.1 648.8 776.0 649.5 C776.9 650.1 777.6 651.0 778.5 653.3 C779.4 655.5 780.1 658.6 781.0 662.0 C781.9 665.4 782.6 668.4 783.5 672.1 C784.4 675.8 785.1 679.0 786.0 682.7 C786.9 686.4 787.6 689.2 788.5 692.5 C789.4 695.7 790.1 698.0 791.0 700.6 C791.9 703.3 792.6 705.0 793.5 707.2 C794.4 709.3 795.1 710.5 796.0 712.5 C796.9 714.6 797.6 715.9 798.5 718.7 C799.4 721.4 800.1 724.0 801.0 727.8 C801.9 731.6 802.6 735.3 803.5 739.8 C804.4 744.2 805.1 748.2 806.0 752.8 C806.9 757.3 807.6 760.7 808.5 764.9 C809.4 769.2 810.1 772.3 811.0 776.2 C811.9 780.2 812.6 783.1 813.5 787.0 C814.4 790.9 815.1 791.7 816.0 797.9 C816.9 804.2 817.6 812.7 818.5 821.8 C819.4 830.8 820.1 839.5 821.0 848.3 C821.9 857.1 822.6 867.8 823.5 870.7 C824.4 873.7 825.1 870.1 826.0 864.6 C826.9 859.0 827.6 849.6 828.5 840.0 C829.4 830.4 830.1 819.9 831.0 811.4 C831.9 802.8 832.6 797.4 833.5 792.5 C834.4 787.5 835.1 786.5 836.0 783.8 C836.9 781.1 837.6 779.6 838.5 777.7 C839.4 775.8 840.1 774.6 841.0 773.3 C841.9 772.0 842.6 771.7 843.5 770.2 C844.4 768.8 845.1 767.6 846.0 765.3 C846.9 763.0 847.6 761.0 848.5 757.6 C849.4 754.3 850.1 750.8 851.0 746.8 C851.9 742.7 852.6 739.4 853.5 735.2 C854.4 730.9 855.1 727.5 856.0 723.2 C856.9 718.8 857.6 715.5 858.5 711.1 C859.4 706.7 860.1 703.1 861.0 698.7 C861.9 694.4 862.6 691.5 863.5 686.9 C864.4 682.3 865.1 678.3 866.0 673.1 C866.9 667.9 867.6 663.7 868.5 658.0 C869.4 652.4 870.1 647.4 871.0 641.8 C871.9 636.1 872.6 632.2 873.5 626.7 C874.4 621.3 875.1 616.9 876.0 611.4 C876.9 605.9 877.6 601.6 878.5 596.2 C879.4 590.9 880.1 586.2 881.0 581.6 C881.9 577.0 882.6 574.3 883.5 570.7 C884.4 567.1 885.1 564.6 886.0 561.6 C886.9 558.6 887.6 556.7 888.5 554.2 C889.4 551.7 890.1 549.7 891.0 547.6 C891.9 545.6 892.6 543.8 893.5 542.8 C894.4 541.7 895.1 541.6 896.0 541.6 C896.9 541.7 897.6 542.1 898.5 543.2 C899.4 544.2 900.1 545.7 901.0 547.5 C901.9 549.3 902.6 550.8 903.5 553.2 C904.4 555.6 905.1 558.0 906.0 560.9 C906.9 563.8 907.6 566.4 908.5 569.5 C909.4 572.5 910.1 574.9 911.0 577.8 C911.9 580.7 912.6 582.7 913.5 585.5 C914.4 588.3 915.1 590.2 916.0 593.1 C916.9 596.1 917.6 598.4 918.5 601.7 C919.5 605.1 920.2 607.7 921.1 611.9 C922.0 616.1 922.7 620.3 923.6 625.1 C924.5 630.0 925.2 633.8 926.1 639.0 C927.0 644.2 927.7 648.7 928.6 654.0 C929.5 659.2 930.2 663.0 931.1 668.2 C932.0 673.4 932.7 677.6 933.6 682.9 C934.5 688.2 935.2 692.2 936.1 697.4 C937.0 702.7 937.7 706.7 938.6 712.1 C939.5 717.5 940.2 722.0 941.1 727.4 C942.0 732.9 942.7 737.1 943.6 742.4 C944.5 747.6 945.2 751.5 946.1 756.4 C947.0 761.3 947.7 765.1 948.6 769.6 C949.5 774.1 950.2 777.4 951.1 781.4 C952.0 785.4 952.7 788.3 953.6 791.8 C954.5 795.2 955.2 797.6 956.1 800.7 C957.0 803.9 957.7 806.1 958.6 809.3 C959.5 812.4 960.2 814.9 961.1 818.2 C962.0 821.4 962.7 824.0 963.6 827.3 C964.5 830.6 965.2 833.2 966.1 836.5 C967.0 839.8 967.7 842.4 968.6 845.7 C969.5 849.0 970.2 851.5 971.1 854.8 C972.0 858.1 972.7 861.1 973.6 864.0 C974.5 867.0 975.2 869.2 976.1 871.3 C977.0 873.4 977.7 874.6 978.6 875.6 C979.5 876.5 980.2 876.5 981.1 876.8 C982.0 877.0 982.7 876.8 983.6 876.8 C984.5 876.8 985.2 876.8 986.1 876.8 C987.0 876.8 987.7 876.8 988.6 876.8 C989.5 876.8 990.2 876.8 991.1 876.8 C992.0 876.8 992.7 876.8 993.6 876.8 C994.5 876.8 995.2 876.8 996.1 876.8 C997.0 876.8 997.7 877.0 998.6 876.8 C999.5 876.5 1000.2 876.5 1001.1 875.4 C1002.0 874.4 1002.7 873.2 1003.6 871.1 C1004.5 869.0 1005.2 866.6 1006.1 863.6 C1007.0 860.7 1007.7 857.8 1008.6 854.5 C1009.5 851.2 1010.2 848.6 1011.1 845.3 C1012.0 842.0 1012.7 839.4 1013.6 836.1 C1014.5 832.8 1015.2 830.3 1016.1 827.0 C1017.0 823.7 1017.7 821.1 1018.6 817.8 C1019.5 814.5 1020.2 811.8 1021.1 808.4 C1022.0 804.9 1022.7 802.2 1023.6 798.7 C1024.5 795.1 1025.2 792.2 1026.1 788.7 C1027.0 785.3 1027.7 782.8 1028.6 779.6 C1029.5 776.5 1030.2 774.2 1031.1 771.4 C1032.0 768.6 1032.7 766.6 1033.6 764.0 C1034.5 761.5 1035.2 759.5 1036.1 757.1 C1037.0 754.8 1037.7 753.1 1038.6 751.0 C1039.5 749.0 1040.2 747.8 1041.1 745.7 C1042.0 743.7 1042.7 742.4 1043.6 739.7 C1044.5 737.0 1045.2 734.3 1046.1 730.7 C1047.0 727.1 1047.7 723.6 1048.6 719.5 C1049.5 715.4 1050.2 711.7 1051.1 708.0 C1052.0 704.3 1052.7 701.9 1053.6 699.0 C1054.5 696.0 1055.2 693.8 1056.1 691.7 C1057.0 689.6 1057.7 688.6 1058.6 687.5 C1059.5 686.3 1060.2 685.7 1061.1 685.1 C1062.0 684.5 1062.7 684.5 1063.6 684.2 C1064.5 683.9 1065.2 683.5 1066.1 683.4 C1067.0 683.4 1067.7 683.4 1068.6 683.9 C1069.5 684.4 1070.2 685.0 1071.1 686.3 C1072.0 687.5 1072.7 689.2 1073.6 690.9 C1074.5 692.7 1075.2 694.2 1076.1 696.1 C1077.0 698.1 1077.7 699.7 1078.6 701.6 C1079.5 703.6 1080.2 704.8 1081.1 707.0 C1082.0 709.2 1082.7 711.6 1083.6 714.0 C1084.5 716.5 1085.2 717.9 1086.1 720.5 C1087.0 723.1 1087.7 725.5 1088.6 728.5 C1089.5 731.5 1090.2 733.8 1091.1 737.1 C1092.0 740.4 1092.7 743.6 1093.6 746.8 C1094.5 750.0 1095.2 752.4 1096.1 754.9 C1097.0 757.4 1097.7 758.7 1098.6 760.5 C1099.5 762.3 1100.2 763.6 1101.1 764.9 C1102.0 766.1 1102.7 766.8 1103.6 767.6 C1104.5 768.4 1105.2 768.8 1106.1 769.3 C1107.0 769.8 1107.7 770.1 1108.6 770.4 C1109.5 770.7 1110.2 771.0 1111.1 771.0 C1112.0 771.0 1112.7 770.8 1113.6 770.4 C1114.5 769.9 1115.2 769.4 1116.1 768.5 C1117.0 767.6 1117.7 766.7 1118.6 765.4 C1119.5 764.0 1120.2 762.9 1121.1 761.0 C1122.0 759.2 1122.7 757.5 1123.6 755.1 C1124.5 752.7 1125.2 750.5 1126.1 747.7 C1127.0 745.0 1127.7 742.8 1128.6 739.7 C1129.5 736.5 1130.2 733.9 1131.1 730.3 C1132.0 726.8 1132.7 723.8 1133.6 719.9 C1134.5 715.9 1135.2 712.5 1136.2 708.4 C1137.1 704.2 1137.8 701.1 1138.7 697.0 C1139.6 693.0 1140.3 689.8 1141.2 686.0 C1142.1 682.1 1142.8 679.2 1143.7 675.6 C1144.6 672.0 1145.3 669.3 1146.2 666.1 C1147.1 662.8 1147.8 660.3 1148.7 657.3 C1149.6 654.4 1150.3 652.3 1151.2 649.7 C1152.1 647.1 1152.8 645.3 1153.7 643.0 C1154.6 640.7 1155.3 639.2 1156.2 637.0 C1157.1 634.8 1157.8 633.2 1158.7 630.9 C1159.6 628.7 1160.3 627.0 1161.2 624.7 C1162.1 622.5 1162.8 620.5 1163.7 618.4 C1164.6 616.4 1165.3 614.7 1166.2 613.2 C1167.1 611.7 1167.8 610.8 1168.7 610.1 C1169.6 609.3 1170.3 609.1 1171.2 609.1 C1172.1 609.1 1172.8 609.5 1173.7 609.9 C1174.6 610.3 1175.3 610.7 1176.2 611.5 C1177.1 612.2 1177.8 613.0 1178.7 614.0 C1179.6 615.1 1180.3 616.0 1181.2 617.3 C1182.1 618.6 1182.8 619.9 1183.7 621.5 C1184.6 623.2 1185.3 624.6 1186.2 626.4 C1187.1 628.3 1187.8 629.9 1188.7 631.8 C1189.6 633.8 1190.3 635.3 1191.2 637.2 C1192.1 639.2 1192.8 640.5 1193.7 642.7 C1194.6 644.8 1195.3 646.7 1196.2 649.3 C1197.1 651.9 1197.8 654.1 1198.7 657.1 C1199.6 660.2 1200.3 662.9 1201.2 666.1 C1202.1 669.4 1202.8 672.0 1203.7 675.1 C1204.6 678.3 1205.3 680.7 1206.2 683.6 C1207.1 686.4 1207.8 688.6 1208.7 691.0 C1209.6 693.5 1210.3 695.2 1211.2 697.2 C1212.1 699.1 1212.8 700.4 1213.7 701.8 C1214.6 703.3 1215.3 704.5 1216.2 705.4 C1217.1 706.4 1217.8 706.8 1218.7 707.4 C1219.6 707.9 1220.3 708.1 1221.2 708.3 C1222.1 708.4 1222.8 708.4 1223.7 708.3 C1224.6 708.1 1225.3 708.0 1226.2 707.5 C1227.1 707.1 1227.8 706.6 1228.7 705.8 C1229.6 705.0 1230.3 704.1 1231.2 703.0 C1232.1 701.9 1232.8 700.8 1233.7 699.6 C1234.6 698.3 1235.3 697.3 1236.2 695.8 C1237.1 694.3 1237.8 693.3 1238.7 691.4 C1239.6 689.6 1240.3 687.9 1241.2 685.5 C1242.1 683.1 1242.8 680.9 1243.7 677.9 C1244.6 674.8 1245.3 672.0 1246.2 668.6 C1247.1 665.1 1247.8 662.3 1248.7 658.9 C1249.6 655.4 1250.3 652.6 1251.2 649.2 C1252.1 645.8 1252.8 643.1 1253.7 639.9 C1254.6 636.8 1255.3 634.5 1256.2 631.6 C1257.1 628.7 1257.8 626.6 1258.7 624.0 C1259.6 621.5 1260.3 619.9 1261.2 617.5 C1262.1 615.1 1262.8 612.9 1263.7 610.5 C1264.6 608.1 1265.3 606.4 1266.2 604.2 C1267.1 602.1 1267.8 600.2 1268.7 598.4 C1269.6 596.6 1270.3 595.5 1271.2 594.1 C1272.1 592.7 1272.8 591.7 1273.7 590.5 C1274.6 589.4 1275.3 588.5 1276.2 587.7 C1277.1 586.9 1277.8 586.5 1278.7 586.0 C1279.6 585.6 1280.3 585.4 1281.2 585.4 C1282.1 585.3 1282.8 585.6 1283.7 585.7 C1284.6 585.8 1285.3 585.9 1286.2 585.8 C1287.1 585.7 1287.8 585.6 1288.7 585.3 C1289.6 585.1 1290.3 584.6 1291.2 584.3 C1292.1 583.9 1292.8 583.6 1293.7 583.5 C1294.6 583.3 1295.3 583.2 1296.2 583.3 C1297.1 583.3 1297.8 583.5 1298.7 583.7 C1299.6 583.9 1300.3 584.3 1301.2 584.4 C1302.1 584.5 1302.8 584.5 1303.7 584.4 C1304.6 584.2 1305.3 583.9 1306.2 583.4 C1307.1 582.8 1307.8 582.1 1308.7 581.4 C1309.6 580.7 1310.3 580.0 1311.2 579.3 C1312.1 578.5 1312.8 577.8 1313.7 577.1 C1314.6 576.3 1315.3 575.6 1316.2 574.9 C1317.1 574.1 1317.8 573.6 1318.7 572.9 C1319.6 572.2 1320.3 571.7 1321.2 571.0 C1322.1 570.4 1322.8 570.1 1323.7 569.3 C1324.6 568.5 1325.3 567.7 1326.2 566.4 C1327.1 565.1 1327.8 563.9 1328.7 562.1 C1329.6 560.3 1330.3 558.5 1331.2 556.3 C1332.1 554.2 1332.8 552.5 1333.7 550.3 C1334.6 548.0 1335.3 546.2 1336.2 543.7 C1337.1 541.2 1337.8 539.2 1338.7 536.4 C1339.6 533.7 1340.3 531.5 1341.2 528.5 C1342.1 525.5 1342.8 523.0 1343.7 519.7 C1344.6 516.4 1345.3 513.8 1346.2 510.4 C1347.1 506.9 1347.8 504.0 1348.7 500.5 C1349.6 497.0 1350.3 494.3 1351.2 490.8 C1352.1 487.4 1352.9 484.7 1353.8 481.4 C1354.7 478.1 1355.4 475.6 1356.3 472.3 C1357.2 469.1 1357.9 466.7 1358.8 463.6 C1359.7 460.5 1360.4 458.0 1361.3 455.1 C1362.2 452.1 1362.9 449.9 1363.8 447.1 C1364.7 444.3 1365.4 442.3 1366.3 439.7 C1367.2 437.1 1367.9 435.3 1368.8 432.8 C1369.7 430.3 1370.4 428.4 1371.3 425.8 C1372.2 423.2 1372.9 421.1 1373.8 418.4 C1374.7 415.8 1375.4 413.7 1376.3 411.2 C1377.2 408.6 1377.9 406.7 1378.8 404.4 C1379.7 402.1 1380.4 400.5 1381.3 398.3 C1382.2 396.2 1382.9 394.6 1383.8 392.5 C1384.7 390.4 1385.4 388.7 1386.3 386.6 C1387.2 384.6 1387.9 382.9 1388.8 380.9 C1389.7 378.9 1390.4 377.3 1391.3 375.4 C1392.2 373.5 1392.9 372.1 1393.8 370.2 C1394.7 368.4 1395.4 367.1 1396.3 365.1 C1397.2 363.2 1397.9 361.6 1398.8 359.5 C1399.7 357.3 1400.4 355.6 1401.3 353.2 C1402.2 350.9 1402.9 348.9 1403.8 346.3 C1404.7 343.7 1405.4 341.6 1406.3 338.8 C1407.2 335.9 1407.9 333.6 1408.8 330.7 C1409.7 327.8 1410.4 325.5 1411.3 322.8 C1412.2 320.1 1412.9 318.0 1413.8 315.5 C1414.7 313.0 1415.4 311.1 1416.3 308.9 C1417.2 306.7 1417.9 305.1 1418.8 303.2 C1419.7 301.3 1420.4 299.9 1421.3 298.3 C1422.2 296.7 1422.9 295.7 1423.8 294.3 C1424.7 293.0 1425.4 291.9 1426.3 290.7 C1427.2 289.6 1427.9 288.6 1428.8 287.7 C1429.7 286.8 1430.4 286.1 1431.3 285.6 C1432.2 285.1 1432.9 285.0 1433.8 285.0 C1434.7 285.0 1435.4 285.1 1436.3 285.6 C1437.2 286.1 1437.9 286.7 1438.8 287.6 C1439.7 288.5 1440.4 289.3 1441.3 290.5 C1442.2 291.8 1442.9 293.0 1443.8 294.6 C1444.7 296.3 1445.4 297.8 1446.3 299.8 C1447.2 301.9 1447.9 303.6 1448.8 305.9 C1449.7 308.1 1450.4 310.1 1451.3 312.4 C1452.2 314.7 1452.9 316.5 1453.8 318.9 C1454.7 321.3 1455.4 323.1 1456.3 325.6 C1457.2 328.0 1457.9 330.0 1458.8 332.4 C1459.7 334.8 1460.4 336.6 1461.3 338.6 C1462.2 340.7 1462.9 342.4 1463.8 343.9 C1464.7 345.4 1465.4 346.0 1466.3 346.7 C1467.2 347.4 1467.9 347.7 1468.8 347.8 C1469.7 348.0 1470.4 347.8 1471.3 347.8 C1472.2 347.8 1472.9 347.9 1473.8 348.1 C1474.7 348.3 1475.4 348.6 1476.3 348.8 C1477.2 349.1 1477.9 349.3 1478.8 349.5 C1479.7 349.7 1480.4 349.8 1481.3 349.9 C1482.2 350.1 1482.9 350.2 1483.8 350.2 C1484.7 350.2 1485.4 350.0 1486.3 349.7 C1487.2 349.4 1487.9 349.1 1488.8 348.4 C1489.7 347.7 1490.4 346.9 1491.3 345.9 C1492.2 344.9 1492.9 343.9 1493.8 342.8 C1494.7 341.8 1495.4 340.8 1496.3 340.0 C1497.2 339.3 1497.9 338.8 1498.8 338.7 C1499.7 338.6 1500.4 338.8 1501.3 339.5 C1502.2 340.1 1502.9 341.1 1503.8 342.4 C1504.7 343.6 1505.4 345.0 1506.3 346.7 C1507.2 348.4 1508.4 350.9 1508.8 351.9" stroke="#a6dbf9" stroke-width="1" fill="none" stroke-linejoin="round"/>
</g>
<path d="M11 438.1H1692.5" stroke="#3090ea" stroke-width="3.2"/>
<path d="M11 475.8H1692.5" stroke="#d45c5c" stroke-width="1.3" stroke-dasharray="4 2"/>

<!-- header icons -->
<g fill="none" stroke="#8b94a7" stroke-width="1.6" stroke-linecap="round" stroke-linejoin="round">
<path d="M83.6 19.2V33M1662.5 19.5V33.6" stroke-width="1.1"/>
<!-- options -->
<path d="M119.7 31V17a2.6 2.6 0 0 0 -2.6 -2.6H106.1a2.6 2.6 0 0 0 -2.6 2.6V31.1a2.6 2.6 0 0 0 2.6 2.6H120.6a2.9 2.9 0 0 0 2.9 -2.9V27.2H120"/>
<path d="M106.7 23.7L109.75 19.9L112.8 24L116.4 20.3" stroke-width="1.5"/><path d="M107.5 28.9H115.4" stroke-width="1.9" stroke-linecap="butt"/>
<!-- material -->
<rect x="234.8" y="14.4" width="16.6" height="18.9" rx="3"/>
<path d="M238.6 19.4h3.6M238.6 24.2h8.8M238.6 28.8h8.8"/>
<!-- monitor -->
<rect x="1397.7" y="14.6" width="19" height="14.8" rx="1.2"/>
<path d="M1407.2 29.6v4M1400.6 33.7h13.4M1401.3 24.6l3.9 -3.6l2.9 2.6l4.6 -4.6M1409.6 18.7h3.4v3.4"/>
<!-- chart edit -->
<path d="M1442.4 13.8V33.6h20"/>
<path d="M1447.3 29.9l1 -4.8l8.4 -8.4a1.4 1.4 0 0 1 2 0l1.8 1.8a1.4 1.4 0 0 1 0 2l-8.4 8.4zM1454.2 19.2l3.9 3.9"/>
<!-- refresh -->
<path d="M1504.2 17.6a9.8 9.8 0 1 0 2.3 9.4M1506.6 13.6v5.6h-5.6"/>
<!-- gear -->
<path d="M1540.14 16.48L1540.42 13.89L1543.18 13.89L1543.46 16.48L1546.09 17.56L1548.11 15.93L1550.07 17.89L1548.44 19.91L1549.52 22.54L1552.11 22.82L1552.11 25.58L1549.52 25.86L1548.44 28.49L1550.07 30.51L1548.11 32.47L1546.09 30.84L1543.46 31.92L1543.18 34.51L1540.42 34.51L1540.14 31.92L1537.51 30.84L1535.49 32.47L1533.53 30.51L1535.16 28.49L1534.08 25.86L1531.49 25.58L1531.49 22.82L1534.08 22.54L1535.16 19.91L1533.53 17.89L1535.49 15.93L1537.51 17.56Z"/>
<circle cx="1541.8" cy="24.2" r="3.3"/>
<!-- fullscreen -->
<path d="M1584.6 21.6l-7 -7M1577.4 20.4v-6h6M1589.8 21.6l7 -7M1597 20.4v-6h-6M1584.6 26.8l-7 7M1577.4 28v6h6M1589.8 26.8l7 7M1597 28v6h-6"/>
<!-- grid -->
<rect x="1622.4" y="15" width="7.6" height="6.4"/><rect x="1634.3" y="15" width="7.6" height="6.4"/><rect x="1622.4" y="27" width="7.6" height="6.6"/><rect x="1634.3" y="27" width="7.6" height="6.6"/>
</g>
<path d="M1764 22.6h9.6l-4.8 5.4z" fill="#8b94a7"/>
<path d="M1626 67.6h10.4l-5.2 5.6z" fill="#8b94a7"/>
<path d="M61.3 188.5h7.2l-3.6 4.7z" fill="#8b94a7"/>
<!-- dropdown arrows toolbar -->
<path d="M62 111.5h5.4l-2.7 3.9zM124.9 111.5h5.4l-2.7 3.9zM187.9 111.5h5.4l-2.7 3.9zM250.7 111.5h5.4l-2.7 3.9zM313.9 111.5h5.4l-2.7 3.9zM376.7 111.5h5.4l-2.7 3.9zM439.8 111.5h5.4l-2.7 3.9z" fill="#8b94a7"/>
<!-- toolbar icons -->
<g fill="none" stroke="#8b94a7" stroke-width="1.5" stroke-linecap="round" stroke-linejoin="round">
<path d="M32.8 120L48 104.9"/>
<rect x="95.2" y="104.1" width="16.4" height="16.7"/>
<path d="M156.5 120.8L159 109.9L162.8 116.5L166.5 103.6L170.3 116.5L174 109.9L176.5 120.8"/>
<path d="M219 103.6H239.8M228.4 108H239.8M228.4 112.3H239.8M219 116.9H239.8M219 121.3H239.8" stroke-linecap="butt"/>
<path d="M301.3 121.3L283.4 103.4M297.4 103.5H283.4V116.9"/>
<path d="M346.1 102.9H364.9M346.1 122.1H364.9M355.5 103V122" stroke-linecap="butt"/>
<path d="M407.8 104.3H429.6V120.1H421.6L418.6 123.2L415.6 120.1H407.8Z"/>
<path d="M469.7 99.7V124.6H494.4" stroke-linecap="butt"/>
<rect x="475" y="106.2" width="4.3" height="11.3"/>
<path d="M477.15 104.2V106M477.15 117.7V120.2M486 101.2V103M486 114.5V116.8"/>
<rect x="483.9" y="103" width="4.3" height="11.4" fill="#8b94a7"/>
<path d="M513.4 102.9V121.6M769.2 102.9V121.6" stroke="#38414f" stroke-width="1.2"/>
<!-- pencil squiggle -->
<path d="M537.6 118.6l1.4 -5l11.8 -11.9a1.2 1.2 0 0 1 1.7 0l2 2a1.2 1.2 0 0 1 0 1.7l-11.9 11.8zM549 103.6l3.5 3.5"/>
<path d="M534.4 121.2c3.5 2.6 6.5 -1.3 10.2 -1.7c4.2 -.4 5.6 3 10.2 3.4"/>
<!-- lock -->
<rect x="584.2" y="110.4" width="18.6" height="12.3" rx="2.6"/>
<path d="M588 110.4V107a5.3 5.3 0 0 1 10.4 -1.6M593.5 114.6V118.4"/>
<!-- eye -->
<path d="M630.2 112.6Q641.6 100.4 653.2 112.6Q641.6 124.8 630.2 112.6Z"/>
<!-- magnet -->
<path d="M679.8 122V111.8a9.7 9.7 0 0 1 19.4 0V122H693.6V111.8a4.1 4.1 0 0 0 -8.2 0V122ZM679.8 118.4h5.6M693.6 118.4h5.6"/>
<!-- trash -->
<path d="M792 105.6H811.4M797.2 102.4H806.2M794.2 105.8V119a4 4 0 0 0 4 4H805.2a4 4 0 0 0 4 -4V105.8M799.2 110.2V118.2M804.2 110.2V118.2"/>
</g>
<g fill="#8b94a7">
<circle cx="32.8" cy="120" r="2.1"/><circle cx="48" cy="104.9" r="2.1"/>
<circle cx="95.2" cy="104.1" r="2.1"/><circle cx="111.6" cy="104.1" r="2.1"/><circle cx="95.2" cy="120.8" r="2.1"/><circle cx="111.6" cy="120.8" r="2.1"/>
<circle cx="156.5" cy="120.8" r="1.9"/><circle cx="159" cy="109.9" r="1.9"/><circle cx="162.8" cy="116.5" r="1.9"/><circle cx="166.5" cy="103.6" r="1.9"/><circle cx="170.3" cy="116.5" r="1.9"/><circle cx="174" cy="109.9" r="1.9"/><circle cx="176.5" cy="120.8" r="1.9"/>
<path d="M355.5 103.6l3.4 4.4h-6.8z"/>
<circle cx="641.6" cy="112.6" r="4.4"/>
<text x="218.4" y="114.6" font-size="10px" font-weight="400" stroke="#8b94a7" stroke-width="0.3">G</text>
<text x="411.6" y="116.2" font-size="10px" font-weight="700" textLength="14.4" lengthAdjust="spacingAndGlyphs">Aa</text>
</g>
<circle cx="642.2" cy="110.5" r="1.3" fill="#1b212b"/>
<g fill="none" stroke="#e8d53a" stroke-width="2" stroke-linejoin="round">
<rect x="736.3" y="102.9" width="11.6" height="10.6" rx="2.4"/><rect x="726.4" y="112.2" width="11.6" height="10.4" rx="2.4"/>
</g>
<!-- collapse button -->
<rect x="18.3" y="205.3" width="30.4" height="29.3" rx="3.4" fill="none" stroke="#29313d" stroke-width="1.5"/>
<path d="M27.4 222.8l5.6 -5l5.6 5" fill="none" stroke="#384150" stroke-width="2"/>
<!-- left handle arrow -->
<path d="M0 437.7L1.4 437.5L5.6 442.1L1.4 446.7L0 446.5Z" fill="#8892a4"/>
<!-- scroll handle triangle -->
<path d="M898.3 845.8h9.4l-4.7 -5.5z" fill="#9aa3b3"/>
<!-- bottom icons -->
<g fill="none" stroke="#8b94a7" stroke-width="1.5">
<rect x="18.6" y="865" width="19.4" height="19" rx="3"/>
<path d="M1770 881.5a3 3 0 0 0 3 1.6h9.4a3.6 3.6 0 0 0 3.6 -3.6V870.5a3 3 0 0 0 -1.6 -2.8"/>
<rect x="1766.8" y="863.4" width="15" height="15" rx="3.4"/>
</g>
<rect x="22.7" y="868.6" width="4.4" height="11.9" rx="1.2" fill="#8b94a7"/>
</svg>
<span class="t" style="left:22.77px;top:14.15px;font-size:22.5px;color:#e4e7ec;transform:scaleX(0.8903)">.SPX</span>
<span class="t" style="left:130.85px;top:14.15px;font-size:22.5px;color:#e4e7ec;transform:scaleX(0.8961)">Options</span>
<span class="t" style="left:260.61px;top:14.15px;font-size:22.5px;color:#e4e7ec;transform:scaleX(0.9169)">Material</span>
<span class="t" style="left:1680.30px;top:16.89px;font-size:19.5px;color:#8b94a7;transform:scaleX(0.9989)">Unnamed</span>
<span class="t" style="left:23.70px;top:58.37px;font-size:20.0px;color:#8b94a7;transform:scaleX(0.9876)">1D</span>
<span class="t" style="left:63.90px;top:58.37px;font-size:20.0px;color:#8b94a7;transform:scaleX(0.9954)">5D</span>
<span class="t" style="left:103.48px;top:58.37px;font-size:20.0px;color:#f0d837;transform:scaleX(1.0468)">D</span>
<span class="t" style="left:132.92px;top:58.37px;font-size:20.0px;color:#8b94a7;transform:scaleX(0.9508)">W</span>
<span class="t" style="left:165.94px;top:58.37px;font-size:20.0px;color:#8b94a7;transform:scaleX(1.1361)">M</span>
<span class="t" style="left:197.99px;top:58.37px;font-size:20.0px;color:#8b94a7;transform:scaleX(1.0621)">Q</span>
<span class="t" style="left:228.60px;top:58.37px;font-size:20.0px;color:#8b94a7;transform:scaleX(0.9068)">Y</span>
<span class="t" style="left:254.71px;top:58.37px;font-size:20.0px;color:#8b94a7;transform:scaleX(1.0464)">1m</span>
<span class="t" style="left:297.45px;top:58.37px;font-size:20.0px;color:#8b94a7;transform:scaleX(1.0408)">2m</span>
<span class="t" style="left:341.22px;top:58.37px;font-size:20.0px;color:#8b94a7;transform:scaleX(1.0193)">3m</span>
<span class="t" style="left:384.49px;top:58.37px;font-size:20.0px;color:#8b94a7;transform:scaleX(1.0169)">5m</span>
<span class="t" style="left:426.93px;top:58.37px;font-size:20.0px;color:#8b94a7;transform:scaleX(1.0314)">10m</span>
<span class="t" style="left:480.63px;top:58.37px;font-size:20.0px;color:#8b94a7;transform:scaleX(1.0287)">15m</span>
<span class="t" style="left:535.23px;top:58.37px;font-size:20.0px;color:#8b94a7;transform:scaleX(1.0101)">30m</span>
<span class="t" style="left:588.72px;top:58.37px;font-size:20.0px;color:#8b94a7;transform:scaleX(1.0348)">1h</span>
<span class="t" style="left:625.44px;top:58.37px;font-size:20.0px;color:#8b94a7;transform:scaleX(1.0581)">2h</span>
<span class="t" style="left:662.22px;top:58.37px;font-size:20.0px;color:#8b94a7;transform:scaleX(1.0396)">4h</span>
<span class="t" style="left:1487.57px;top:59.69px;font-size:19.5px;color:#8b94a7;transform:scaleX(1.0459)">Split-Adjusted</span>
<span class="t" style="left:1658.84px;top:59.69px;font-size:19.5px;color:#8b94a7;transform:scaleX(0.9530)">%</span>
<span class="t" style="left:1690.36px;top:59.69px;font-size:19.5px;color:#8b94a7;transform:scaleX(1.0243)">Log</span>
<span class="t" style="left:1739.46px;top:59.69px;font-size:19.5px;color:#8b94a7;transform:scaleX(1.0469)">Auto</span>
<span class="t" style="left:14.69px;top:144.69px;font-size:19.5px;color:#e4e7ec;transform:scaleX(1.0714)">High</span>
<span class="t" style="left:62.06px;top:144.69px;font-size:19.5px;color:#e3605f;transform:scaleX(0.9828)">4313.01</span>
<span class="t" style="left:136.76px;top:144.69px;font-size:19.5px;color:#e4e7ec;transform:scaleX(1.0217)">Open</span>
<span class="t" style="left:189.75px;top:144.69px;font-size:19.5px;color:#e3605f;transform:scaleX(0.9986)">4312.88</span>
<span class="t" style="left:264.08px;top:144.69px;font-size:19.5px;color:#e4e7ec;transform:scaleX(0.9526)">Low</span>
<span class="t" style="left:304.05px;top:144.69px;font-size:19.5px;color:#e3605f;transform:scaleX(0.9986)">4265.98</span>
<span class="t" style="left:378.47px;top:144.69px;font-size:19.5px;color:#e4e7ec;transform:scaleX(0.9417)">Close</span>
<span class="t" style="left:430.26px;top:144.69px;font-size:19.5px;color:#e3605f;transform:scaleX(0.9872)">4273.53</span>
<span class="t" style="left:504.84px;top:144.69px;font-size:19.5px;color:#e4e7ec;transform:scaleX(0.9661)">Change</span>
<span class="t" style="left:576.74px;top:144.69px;font-size:19.5px;color:#e3605f;transform:scaleX(0.9876)">-63.91(-1.47%)</span>
<span class="t" style="left:710.71px;top:144.69px;font-size:19.5px;color:#e4e7ec;transform:scaleX(1.0017)">Volume</span>
<span class="t" style="left:780.89px;top:144.69px;font-size:19.5px;color:#e4e7ec;transform:scaleX(0.9313)">2.13BShare</span>
<span class="t" style="left:17.69px;top:180.92px;font-size:19.0px;color:#e4e7ec;transform:scaleX(1.1002)">MA</span>
<span class="t" style="left:78.69px;top:180.92px;font-size:19.0px;color:#6fb9f2;transform:scaleX(1.0336)">MA20:4441.99</span>
<span class="t" style="left:221.30px;top:180.92px;font-size:19.0px;color:#e2557f;transform:scaleX(1.0281)">MA50:4468.56</span>
<span class="t" style="left:363.20px;top:180.92px;font-size:19.0px;color:#e3bb45;transform:scaleX(1.0296)">MA200:4194.59</span>
<span class="t" style="left:92.30px;top:864.15px;font-size:22.5px;color:#e4e7ec;transform:scaleX(1.0307)">Position</span>
<span class="t" style="left:236.53px;top:864.15px;font-size:22.5px;color:#e4e7ec;transform:scaleX(1.0040)">Order</span>
<span class="t" style="left:1698.05px;top:178.99px;font-size:19.5px;color:#dfe3e9;transform:scaleX(0.9972)">4665.68</span>
<span class="t" style="left:1698.05px;top:236.99px;font-size:19.5px;color:#dfe3e9;transform:scaleX(0.9983)">4587.09</span>
<span class="t" style="left:1698.05px;top:293.99px;font-size:19.5px;color:#dfe3e9;transform:scaleX(0.9960)">4508.50</span>
<span class="t" style="left:1698.05px;top:351.99px;font-size:19.5px;color:#dfe3e9;transform:scaleX(0.9987)">4429.91</span>
<span class="t" style="left:1698.05px;top:408.99px;font-size:19.5px;color:#dfe3e9;transform:scaleX(0.9991)">4351.32</span>
<span class="t" style="left:1698.06px;top:523.99px;font-size:19.5px;color:#dfe3e9;transform:scaleX(0.9932)">4194.14</span>
<span class="t" style="left:1698.04px;top:581.99px;font-size:19.5px;color:#dfe3e9;transform:scaleX(1.0181)">4115.55</span>
<span class="t" style="left:1698.05px;top:638.99px;font-size:19.5px;color:#dfe3e9;transform:scaleX(0.9973)">4036.96</span>
<span class="t" style="left:1697.75px;top:696.99px;font-size:19.5px;color:#dfe3e9;transform:scaleX(1.0034)">3958.37</span>
<span class="t" style="left:1697.76px;top:754.99px;font-size:19.5px;color:#dfe3e9;transform:scaleX(1.0015)">3879.78</span>
<span class="t" style="left:1698.05px;top:466.49px;font-size:19.5px;color:#ffffff;transform:scaleX(0.9973)">4273.53</span>
<span class="t" style="left:1613.05px;top:414.09px;font-size:19.5px;color:#3b8fe6;transform:scaleX(1.0032)">4325.00</span>
<span class="t" style="left:125.81px;top:813.39px;font-size:19.5px;color:#9aa3b3;transform:scaleX(1.0568)">May</span>
<span class="t" style="left:228.40px;top:813.39px;font-size:19.5px;color:#9aa3b3;transform:scaleX(0.9906)">Jul</span>
<span class="t" style="left:317.22px;top:813.39px;font-size:19.5px;color:#9aa3b3;transform:scaleX(0.9978)">Sept</span>
<span class="t" style="left:413.24px;top:813.39px;font-size:19.5px;color:#9aa3b3;transform:scaleX(1.0360)">Nov</span>
<span class="t" style="left:506.58px;top:813.39px;font-size:19.5px;color:#9aa3b3;transform:scaleX(1.0357)">2022</span>
<span class="t" style="left:695.11px;top:813.39px;font-size:19.5px;color:#9aa3b3;transform:scaleX(1.0568)">May</span>
<span class="t" style="left:797.32px;top:813.39px;font-size:19.5px;color:#9aa3b3;transform:scaleX(0.9349)">Jul</span>
<span class="t" style="left:885.63px;top:813.39px;font-size:19.5px;color:#9aa3b3;transform:scaleX(0.9850)">Sept</span>
<span class="t" style="left:982.35px;top:813.39px;font-size:19.5px;color:#9aa3b3;transform:scaleX(1.0299)">Nov</span>
<span class="t" style="left:1074.00px;top:813.39px;font-size:19.5px;color:#9aa3b3;transform:scaleX(1.0158)">2023</span>
<span class="t" style="left:1259.00px;top:813.39px;font-size:19.5px;color:#9aa3b3;transform:scaleX(1.0653)">May</span>
<span class="t" style="left:1363.91px;top:813.39px;font-size:19.5px;color:#9aa3b3;transform:scaleX(0.9477)">Jul</span>
<span class="t" style="left:1452.43px;top:813.39px;font-size:19.5px;color:#9aa3b3;transform:scaleX(0.9773)">Sept</span>
</body></html>
